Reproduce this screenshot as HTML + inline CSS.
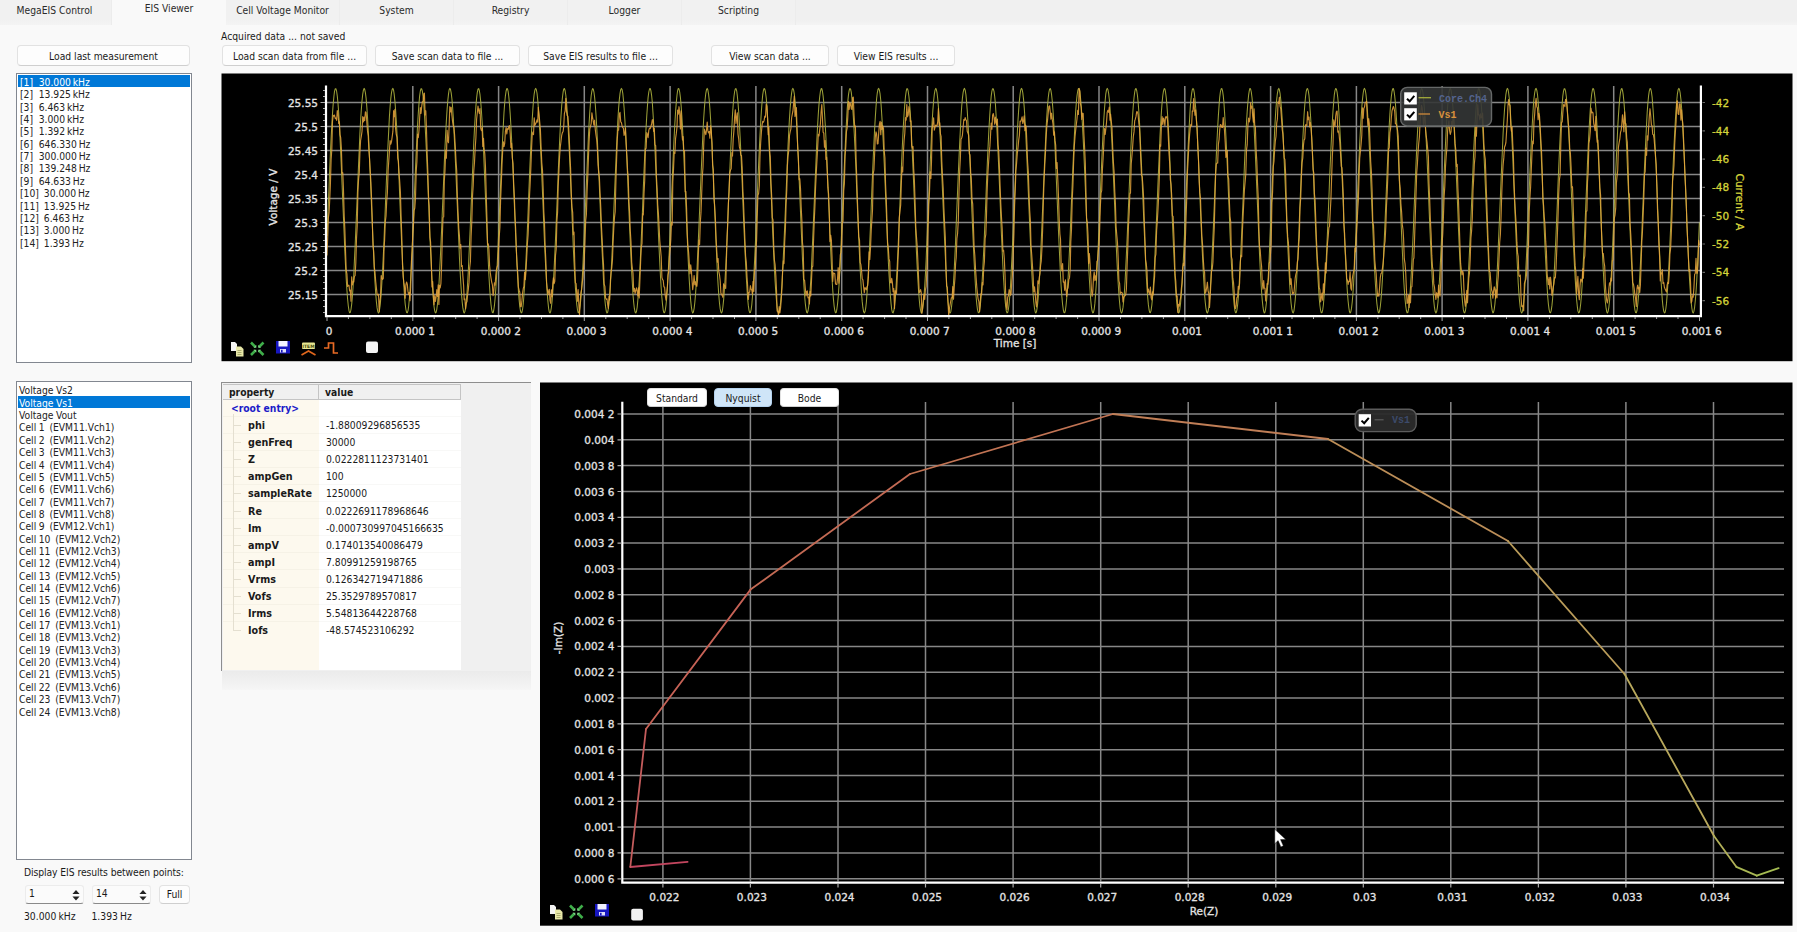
<!DOCTYPE html><html><head><meta charset="utf-8"><title>MegaEIS - EIS Viewer</title><style>
*{box-sizing:border-box;margin:0;padding:0}
html,body{width:1797px;height:932px;overflow:hidden;background:#f9f9f9}
body{position:relative;font-family:"DejaVu Sans Condensed","Liberation Sans",sans-serif;font-size:10.25px;color:#1a1a1a}
.a{position:absolute;white-space:pre}
.tab{position:absolute;top:0;height:25px;width:114px;background:linear-gradient(#f1f1f1 80%,#f4f4f4);border-right:1px solid #ececec;text-align:center;line-height:21px;color:#2a2a2a}
.tab.on{background:#f9f9f9;height:25px;border:none;line-height:17px}
.btn{position:absolute;height:21px;background:#fdfdfd;border:1px solid #e2e2e2;border-bottom-color:#cfcfcf;border-radius:4px;text-align:center;line-height:20px;white-space:pre;color:#1a1a1a}
.list{position:absolute;background:#fff;border:1px solid #828790}
.li{position:absolute;left:2px;white-space:pre;height:12px;line-height:12px;color:#222;word-spacing:-0.5px}
.sel{position:absolute;background:#0078d7}
.pl{font-family:"DejaVu Sans","Liberation Sans",sans-serif;font-size:10.5px;fill:#e4e4e4;stroke:#e4e4e4;stroke-width:.3px}
</style></head><body>
<div class="a" style="left:0;top:0;width:1797px;height:25px;background:linear-gradient(#f0f0f0 80%,#f4f4f4)"></div>
<div class="tab" style="left:-2px">MegaEIS Control</div>
<div class="tab on" style="left:112px">EIS Viewer</div>
<div class="tab" style="left:226px">Cell Voltage Monitor</div>
<div class="tab" style="left:340px">System</div>
<div class="tab" style="left:454px">Registry</div>
<div class="tab" style="left:568px">Logger</div>
<div class="tab" style="left:682px">Scripting</div>
<div class="btn" style="left:17px;top:45px;width:173px">Load last measurement</div>
<div class="a" style="left:221px;top:30px;line-height:13px">Acquired data ... not saved</div>
<div class="btn" style="left:222px;top:45px;width:145px">Load scan data from file ...</div>
<div class="btn" style="left:375px;top:45px;width:145px">Save scan data to file ...</div>
<div class="btn" style="left:528px;top:45px;width:145px">Save EIS results to file ...</div>
<div class="btn" style="left:711px;top:45px;width:118px">View scan data ...</div>
<div class="btn" style="left:837px;top:45px;width:118px">View EIS results ...</div>
<div class="list" style="left:16px;top:73px;width:176px;height:290px">
<div class="sel" style="left:1px;top:1px;width:172px;height:12px"></div>
<div class="li" style="left:3px;top:1.80px;color:#fff;">[1]<span style="position:absolute;left:18.7px;word-spacing:-1.1px">30.000 kHz</span></div>
<div class="li" style="left:3px;top:14.18px;">[2]<span style="position:absolute;left:18.7px;word-spacing:-1.1px">13.925 kHz</span></div>
<div class="li" style="left:3px;top:26.56px;">[3]<span style="position:absolute;left:18.7px;word-spacing:-1.1px">6.463 kHz</span></div>
<div class="li" style="left:3px;top:38.94px;">[4]<span style="position:absolute;left:18.7px;word-spacing:-1.1px">3.000 kHz</span></div>
<div class="li" style="left:3px;top:51.32px;">[5]<span style="position:absolute;left:18.7px;word-spacing:-1.1px">1.392 kHz</span></div>
<div class="li" style="left:3px;top:63.70px;">[6]<span style="position:absolute;left:18.7px;word-spacing:-1.1px">646.330 Hz</span></div>
<div class="li" style="left:3px;top:76.08px;">[7]<span style="position:absolute;left:18.7px;word-spacing:-1.1px">300.000 Hz</span></div>
<div class="li" style="left:3px;top:88.46px;">[8]<span style="position:absolute;left:18.7px;word-spacing:-1.1px">139.248 Hz</span></div>
<div class="li" style="left:3px;top:100.84px;">[9]<span style="position:absolute;left:18.7px;word-spacing:-1.1px">64.633 Hz</span></div>
<div class="li" style="left:3px;top:113.22px;">[10]<span style="position:absolute;left:23.8px;word-spacing:-1.1px">30.000 Hz</span></div>
<div class="li" style="left:3px;top:125.60px;">[11]<span style="position:absolute;left:23.8px;word-spacing:-1.1px">13.925 Hz</span></div>
<div class="li" style="left:3px;top:137.98px;">[12]<span style="position:absolute;left:23.8px;word-spacing:-1.1px">6.463 Hz</span></div>
<div class="li" style="left:3px;top:150.36px;">[13]<span style="position:absolute;left:23.8px;word-spacing:-1.1px">3.000 Hz</span></div>
<div class="li" style="left:3px;top:162.74px;">[14]<span style="position:absolute;left:23.8px;word-spacing:-1.1px">1.393 Hz</span></div>
</div>
<div class="list" style="left:16px;top:381px;width:176px;height:479px">
<div class="sel" style="left:1px;top:14px;width:172px;height:12px"></div>
<div class="li" style="top:2.40px;">Voltage Vs2</div>
<div class="li" style="top:14.75px;color:#fff;">Voltage Vs1</div>
<div class="li" style="top:27.10px;">Voltage Vout</div>
<div class="li" style="top:39.45px;">Cell 1  (EVM11.Vch1)</div>
<div class="li" style="top:51.80px;">Cell 2  (EVM11.Vch2)</div>
<div class="li" style="top:64.15px;">Cell 3  (EVM11.Vch3)</div>
<div class="li" style="top:76.50px;">Cell 4  (EVM11.Vch4)</div>
<div class="li" style="top:88.85px;">Cell 5  (EVM11.Vch5)</div>
<div class="li" style="top:101.20px;">Cell 6  (EVM11.Vch6)</div>
<div class="li" style="top:113.55px;">Cell 7  (EVM11.Vch7)</div>
<div class="li" style="top:125.90px;">Cell 8  (EVM11.Vch8)</div>
<div class="li" style="top:138.25px;">Cell 9  (EVM12.Vch1)</div>
<div class="li" style="top:150.60px;">Cell 10  (EVM12.Vch2)</div>
<div class="li" style="top:162.95px;">Cell 11  (EVM12.Vch3)</div>
<div class="li" style="top:175.30px;">Cell 12  (EVM12.Vch4)</div>
<div class="li" style="top:187.65px;">Cell 13  (EVM12.Vch5)</div>
<div class="li" style="top:200.00px;">Cell 14  (EVM12.Vch6)</div>
<div class="li" style="top:212.35px;">Cell 15  (EVM12.Vch7)</div>
<div class="li" style="top:224.70px;">Cell 16  (EVM12.Vch8)</div>
<div class="li" style="top:237.05px;">Cell 17  (EVM13.Vch1)</div>
<div class="li" style="top:249.40px;">Cell 18  (EVM13.Vch2)</div>
<div class="li" style="top:261.75px;">Cell 19  (EVM13.Vch3)</div>
<div class="li" style="top:274.10px;">Cell 20  (EVM13.Vch4)</div>
<div class="li" style="top:286.45px;">Cell 21  (EVM13.Vch5)</div>
<div class="li" style="top:298.80px;">Cell 22  (EVM13.Vch6)</div>
<div class="li" style="top:311.15px;">Cell 23  (EVM13.Vch7)</div>
<div class="li" style="top:323.50px;">Cell 24  (EVM13.Vch8)</div>
</div>
<div class="a" style="left:24px;top:866px;line-height:13px;letter-spacing:-0.07px">Display EIS results between points:</div>
<div class="a" style="left:25px;top:885px;width:59px;height:19px;background:#fbfbfb;border:1px solid #ececec;border-bottom:1px solid #8a8a8a;border-radius:3px;line-height:15px;padding-left:3px">1<svg class="a" style="right:3px;top:2.5px" width="8" height="12.5" viewBox="0 0 9 14"><path d="M0.5 5.5 L4.5 1 L8.5 5.5Z M0.5 8.5 L4.5 13 L8.5 8.5Z" fill="#222"/></svg></div>
<div class="a" style="left:92px;top:885px;width:59px;height:19px;background:#fbfbfb;border:1px solid #ececec;border-bottom:1px solid #8a8a8a;border-radius:3px;line-height:15px;padding-left:3px">14<svg class="a" style="right:3px;top:2.5px" width="8" height="12.5" viewBox="0 0 9 14"><path d="M0.5 5.5 L4.5 1 L8.5 5.5Z M0.5 8.5 L4.5 13 L8.5 8.5Z" fill="#222"/></svg></div>
<div class="btn" style="left:159px;top:885px;width:31px;height:19px;line-height:17px">Full</div>
<div class="a" style="left:24px;top:910px;line-height:13px;word-spacing:-0.8px">30.000 kHz</div>
<div class="a" style="left:91.5px;top:910px;line-height:13px;word-spacing:-0.8px">1.393 Hz</div>
<div class="a" style="left:221px;top:382px;width:310px;height:289px;background:#f0f0f0;border-top:1.5px solid #8e8e8e;border-left:1.5px solid #8e8e8e"></div>
<div class="a" style="left:222px;top:671px;width:309px;height:19px;background:linear-gradient(#ebebeb,#f2f2f2 70%,#f6f6f6)"></div>
<div class="a" style="left:223px;top:384px;width:96px;height:286px;background:#fdf9ee"></div>
<div class="a" style="left:319px;top:384px;width:142px;height:286px;background:#fff"></div>
<div class="a" style="left:223px;top:384px;width:96px;height:16px;background:#f0f0f0;border:1px solid #c4c4c4;border-left:none;font-weight:bold;line-height:14px;padding-left:6px">property</div>
<div class="a" style="left:319px;top:384px;width:142px;height:16px;background:#f0f0f0;border:1px solid #c4c4c4;border-left:none;font-weight:bold;line-height:14px;padding-left:6px">value</div>
<div class="a" style="left:231px;top:401px;line-height:14px;font-weight:bold;color:#1c1cc8">&lt;root entry&gt;</div>
<div class="a" style="left:248px;top:419.0px;line-height:14px;font-weight:bold;font-size:10.7px">phi</div>
<div class="a" style="left:326px;top:418.0px;line-height:14px">-1.88009296856535</div>
<div class="a" style="left:233px;top:425.0px;width:8px;height:1px;background:#e4dfd0"></div>
<div class="a" style="left:223px;top:415.5px;width:238px;height:1px;background:rgba(120,120,100,.05)"></div>
<div class="a" style="left:248px;top:436.1px;line-height:14px;font-weight:bold;font-size:10.7px">genFreq</div>
<div class="a" style="left:326px;top:435.1px;line-height:14px">30000</div>
<div class="a" style="left:233px;top:442.1px;width:8px;height:1px;background:#e4dfd0"></div>
<div class="a" style="left:223px;top:432.6px;width:238px;height:1px;background:rgba(120,120,100,.05)"></div>
<div class="a" style="left:248px;top:453.2px;line-height:14px;font-weight:bold;font-size:10.7px">Z</div>
<div class="a" style="left:326px;top:452.2px;line-height:14px">0.0222811123731401</div>
<div class="a" style="left:233px;top:459.2px;width:8px;height:1px;background:#e4dfd0"></div>
<div class="a" style="left:223px;top:449.7px;width:238px;height:1px;background:rgba(120,120,100,.05)"></div>
<div class="a" style="left:248px;top:470.3px;line-height:14px;font-weight:bold;font-size:10.7px">ampGen</div>
<div class="a" style="left:326px;top:469.3px;line-height:14px">100</div>
<div class="a" style="left:233px;top:476.3px;width:8px;height:1px;background:#e4dfd0"></div>
<div class="a" style="left:223px;top:466.8px;width:238px;height:1px;background:rgba(120,120,100,.05)"></div>
<div class="a" style="left:248px;top:487.4px;line-height:14px;font-weight:bold;font-size:10.7px">sampleRate</div>
<div class="a" style="left:326px;top:486.4px;line-height:14px">1250000</div>
<div class="a" style="left:233px;top:493.4px;width:8px;height:1px;background:#e4dfd0"></div>
<div class="a" style="left:223px;top:483.9px;width:238px;height:1px;background:rgba(120,120,100,.05)"></div>
<div class="a" style="left:248px;top:504.5px;line-height:14px;font-weight:bold;font-size:10.7px">Re</div>
<div class="a" style="left:326px;top:503.5px;line-height:14px">0.0222691178968646</div>
<div class="a" style="left:233px;top:510.5px;width:8px;height:1px;background:#e4dfd0"></div>
<div class="a" style="left:223px;top:501.0px;width:238px;height:1px;background:rgba(120,120,100,.05)"></div>
<div class="a" style="left:248px;top:521.6px;line-height:14px;font-weight:bold;font-size:10.7px">Im</div>
<div class="a" style="left:326px;top:520.6px;line-height:14px">-0.000730997045166635</div>
<div class="a" style="left:233px;top:527.6px;width:8px;height:1px;background:#e4dfd0"></div>
<div class="a" style="left:223px;top:518.1px;width:238px;height:1px;background:rgba(120,120,100,.05)"></div>
<div class="a" style="left:248px;top:538.7px;line-height:14px;font-weight:bold;font-size:10.7px">ampV</div>
<div class="a" style="left:326px;top:537.7px;line-height:14px">0.174013540086479</div>
<div class="a" style="left:233px;top:544.7px;width:8px;height:1px;background:#e4dfd0"></div>
<div class="a" style="left:223px;top:535.2px;width:238px;height:1px;background:rgba(120,120,100,.05)"></div>
<div class="a" style="left:248px;top:555.8px;line-height:14px;font-weight:bold;font-size:10.7px">ampI</div>
<div class="a" style="left:326px;top:554.8px;line-height:14px">7.80991259198765</div>
<div class="a" style="left:233px;top:561.8px;width:8px;height:1px;background:#e4dfd0"></div>
<div class="a" style="left:223px;top:552.3px;width:238px;height:1px;background:rgba(120,120,100,.05)"></div>
<div class="a" style="left:248px;top:572.9px;line-height:14px;font-weight:bold;font-size:10.7px">Vrms</div>
<div class="a" style="left:326px;top:571.9px;line-height:14px">0.126342719471886</div>
<div class="a" style="left:233px;top:578.9px;width:8px;height:1px;background:#e4dfd0"></div>
<div class="a" style="left:223px;top:569.4px;width:238px;height:1px;background:rgba(120,120,100,.05)"></div>
<div class="a" style="left:248px;top:590.0px;line-height:14px;font-weight:bold;font-size:10.7px">Vofs</div>
<div class="a" style="left:326px;top:589.0px;line-height:14px">25.3529789570817</div>
<div class="a" style="left:233px;top:596.0px;width:8px;height:1px;background:#e4dfd0"></div>
<div class="a" style="left:223px;top:586.5px;width:238px;height:1px;background:rgba(120,120,100,.05)"></div>
<div class="a" style="left:248px;top:607.1px;line-height:14px;font-weight:bold;font-size:10.7px">Irms</div>
<div class="a" style="left:326px;top:606.1px;line-height:14px">5.54813644228768</div>
<div class="a" style="left:233px;top:613.1px;width:8px;height:1px;background:#e4dfd0"></div>
<div class="a" style="left:223px;top:603.6px;width:238px;height:1px;background:rgba(120,120,100,.05)"></div>
<div class="a" style="left:248px;top:624.2px;line-height:14px;font-weight:bold;font-size:10.7px">Iofs</div>
<div class="a" style="left:326px;top:623.2px;line-height:14px">-48.574523106292</div>
<div class="a" style="left:233px;top:630.2px;width:8px;height:1px;background:#e4dfd0"></div>
<div class="a" style="left:223px;top:620.7px;width:238px;height:1px;background:rgba(120,120,100,.05)"></div>
<div class="a" style="left:233px;top:414px;width:1px;height:216px;background:#e4dfd0"></div>
<svg class="a" style="left:221px;top:73px" width="1572" height="289" viewBox="221 73 1572 289">
<rect x="221.5" y="73.5" width="1571" height="287.7" fill="#000"/>
<path d="M327 102.5H1701M327 126.5H1701M327 150.5H1701M327 174.5H1701M327 198.5H1701M327 222.5H1701M327 246.5H1701M327 270.5H1701M327 294.5H1701M412.8 86V316M498.6 86V316M584.3 86V316M670.1 86V316M755.9 86V316M841.7 86V316M927.5 86V316M1013.2 86V316M1099.0 86V316M1184.8 86V316M1270.6 86V316M1356.4 86V316M1442.1 86V316M1527.9 86V316M1613.7 86V316" stroke="#878787" stroke-width="1.5" fill="none"/>
<polyline points="327.0 235.9 327.7 219.5 328.4 202.6 329.1 185.7 329.7 169.2 330.4 153.3 331.1 138.6 331.8 125.2 332.5 113.6 333.2 103.9 333.9 96.5 334.5 91.4 335.2 88.8 335.9 88.7 336.6 91.2 337.3 96.1 338.0 103.5 338.7 113.0 339.4 124.6 340.0 137.8 340.7 152.5 341.4 168.3 342.1 184.9 342.8 201.8 343.5 218.6 344.2 235.1 344.8 250.8 345.5 265.3 346.2 278.4 346.9 289.7 347.6 299.0 348.3 306.0 349.0 310.7 349.6 312.8 350.3 312.5 351.0 309.5 351.7 304.1 352.4 296.4 353.1 286.5 353.8 274.6 354.4 261.1 355.1 246.2 355.8 230.2 356.5 213.6 357.2 196.7 357.9 179.9 358.6 163.5 359.3 148.0 359.9 133.7 360.6 120.9 361.3 109.9 362.0 101.0 362.7 94.4 363.4 90.2 364.1 88.4 364.7 89.3 365.4 92.6 366.1 98.4 366.8 106.6 367.5 116.9 368.2 129.0 368.9 142.8 369.5 158.0 370.2 174.1 370.9 190.8 371.6 207.7 372.3 224.4 373.0 240.7 373.7 256.0 374.3 270.1 375.0 282.5 375.7 293.2 376.4 301.7 377.1 307.9 377.8 311.7 378.5 313.0 379.2 311.7 379.8 307.9 380.5 301.7 381.2 293.2 381.9 282.5 382.6 270.1 383.3 256.0 384.0 240.7 384.6 224.4 385.3 207.7 386.0 190.8 386.7 174.1 387.4 158.0 388.1 142.8 388.8 129.0 389.4 116.9 390.1 106.6 390.8 98.4 391.5 92.6 392.2 89.3 392.9 88.4 393.6 90.2 394.2 94.4 394.9 101.0 395.6 109.9 396.3 120.9 397.0 133.7 397.7 148.0 398.4 163.5 399.1 179.9 399.7 196.7 400.4 213.6 401.1 230.2 401.8 246.2 402.5 261.1 403.2 274.6 403.9 286.5 404.5 296.4 405.2 304.1 405.9 309.5 406.6 312.5 407.3 312.8 408.0 310.7 408.7 306.0 409.3 299.0 410.0 289.7 410.7 278.4 411.4 265.3 412.1 250.8 412.8 235.1 413.5 218.6 414.1 201.8 414.8 184.9 415.5 168.3 416.2 152.5 416.9 137.8 417.6 124.6 418.3 113.0 419.0 103.5 419.6 96.1 420.3 91.2 421.0 88.7 421.7 88.8 422.4 91.4 423.1 96.5 423.8 103.9 424.4 113.6 425.1 125.2 425.8 138.6 426.5 153.3 427.2 169.2 427.9 185.7 428.6 202.6 429.2 219.5 429.9 235.9 430.6 251.5 431.3 266.0 432.0 279.0 432.7 290.2 433.4 299.4 434.0 306.3 434.7 310.8 435.4 312.9 436.1 312.4 436.8 309.3 437.5 303.8 438.2 295.9 438.9 285.9 439.5 274.0 440.2 260.3 440.9 245.4 441.6 229.4 442.3 212.7 443.0 195.8 443.7 179.0 444.3 162.7 445.0 147.2 445.7 133.0 446.4 120.3 447.1 109.4 447.8 100.6 448.5 94.1 449.1 90.0 449.8 88.4 450.5 89.4 451.2 92.9 451.9 98.8 452.6 107.1 453.3 117.4 453.9 129.7 454.6 143.6 455.3 158.8 456.0 174.9 456.7 191.6 457.4 208.5 458.1 225.3 458.8 241.5 459.4 256.7 460.1 270.7 460.8 283.1 461.5 293.7 462.2 302.1 462.9 308.2 463.6 311.9 464.2 313.0 464.9 311.6 465.6 307.7 466.3 301.3 467.0 292.7 467.7 281.9 468.4 269.4 469.0 255.2 469.7 239.9 470.4 223.6 471.1 206.8 471.8 189.9 472.5 173.2 473.2 157.2 473.8 142.1 474.5 128.4 475.2 116.3 475.9 106.1 476.6 98.1 477.3 92.4 478.0 89.2 478.7 88.5 479.3 90.3 480.0 94.7 480.7 101.4 481.4 110.5 482.1 121.5 482.8 134.4 483.5 148.8 484.1 164.3 484.8 180.7 485.5 197.5 486.2 214.5 486.9 231.0 487.6 247.0 488.3 261.8 488.9 275.3 489.6 287.0 490.3 296.9 491.0 304.5 491.7 309.7 492.4 312.5 493.1 312.8 493.7 310.5 494.4 305.7 495.1 298.5 495.8 289.1 496.5 277.7 497.2 264.6 497.9 250.0 498.6 234.3 499.2 217.8 499.9 200.9 500.6 184.0 501.3 167.5 502.0 151.8 502.7 137.1 503.4 123.9 504.0 112.5 504.7 103.0 505.4 95.8 506.1 91.0 506.8 88.6 507.5 88.8 508.2 91.6 508.8 96.8 509.5 104.4 510.2 114.1 510.9 125.8 511.6 139.3 512.3 154.1 513.0 170.0 513.6 186.6 514.3 203.5 515.0 220.3 515.7 236.7 516.4 252.3 517.1 266.7 517.8 279.6 518.4 290.7 519.1 299.8 519.8 306.6 520.5 311.0 521.2 312.9 521.9 312.3 522.6 309.1 523.3 303.5 523.9 295.5 524.6 285.4 525.3 273.3 526.0 259.6 526.7 244.6 527.4 228.5 528.1 211.9 528.7 195.0 529.4 178.2 530.1 161.9 530.8 146.5 531.5 132.3 532.2 119.7 532.9 108.9 533.5 100.3 534.2 93.8 534.9 89.9 535.6 88.4 536.3 89.5 537.0 93.1 537.7 99.2 538.3 107.5 539.0 118.0 539.7 130.4 540.4 144.3 541.1 159.6 541.8 175.7 542.5 192.5 543.2 209.4 543.8 226.1 544.5 242.3 545.2 257.5 545.9 271.4 546.6 283.7 547.3 294.1 548.0 302.4 548.6 308.4 549.3 312.0 550.0 313.0 550.7 311.5 551.4 307.4 552.1 300.9 552.8 292.2 553.4 281.3 554.1 268.7 554.8 254.5 555.5 239.1 556.2 222.8 556.9 206.0 557.6 189.0 558.2 172.4 558.9 156.4 559.6 141.4 560.3 127.7 561.0 115.7 561.7 105.6 562.4 97.7 563.1 92.2 563.7 89.1 564.4 88.5 565.1 90.5 565.8 95.0 566.5 101.8 567.2 111.0 567.9 122.1 568.5 135.1 569.2 149.5 569.9 165.1 570.6 181.6 571.3 198.4 572.0 215.3 572.7 231.9 573.3 247.7 574.0 262.5 574.7 275.9 575.4 287.6 576.1 297.3 576.8 304.8 577.5 310.0 578.1 312.6 578.8 312.7 579.5 310.3 580.2 305.4 580.9 298.1 581.6 288.6 582.3 277.1 583.0 263.9 583.6 249.2 584.3 233.4 585.0 216.9 585.7 200.0 586.4 183.2 587.1 166.7 587.8 151.0 588.4 136.4 589.1 123.3 589.8 112.0 590.5 102.6 591.2 95.5 591.9 90.8 592.6 88.6 593.2 88.9 593.9 91.8 594.6 97.1 595.3 104.8 596.0 114.7 596.7 126.5 597.4 140.0 598.0 154.9 598.7 170.8 599.4 187.4 600.1 204.3 600.8 221.2 601.5 237.5 602.2 253.1 602.9 267.4 603.5 280.2 604.2 291.2 604.9 300.2 605.6 306.9 606.3 311.2 607.0 313.0 607.7 312.2 608.3 308.9 609.0 303.1 609.7 295.0 610.4 284.8 611.1 272.7 611.8 258.9 612.5 243.8 613.1 227.7 613.8 211.0 614.5 194.1 615.2 177.3 615.9 161.1 616.6 145.7 617.3 131.6 617.9 119.1 618.6 108.4 619.3 99.9 620.0 93.6 620.7 89.7 621.4 88.4 622.1 89.6 622.8 93.4 623.4 99.5 624.1 108.0 624.8 118.6 625.5 131.1 626.2 145.1 626.9 160.4 627.6 176.6 628.2 193.3 628.9 210.3 629.6 227.0 630.3 243.1 631.0 258.2 631.7 272.1 632.4 284.3 633.0 294.6 633.7 302.8 634.4 308.7 635.1 312.1 635.8 313.0 636.5 311.3 637.2 307.1 637.8 300.5 638.5 291.7 639.2 280.7 639.9 268.0 640.6 253.7 641.3 238.2 642.0 221.9 642.7 205.1 643.3 188.2 644.0 171.5 644.7 155.6 645.4 140.6 646.1 127.1 646.8 115.2 647.5 105.2 648.1 97.4 648.8 92.0 649.5 89.0 650.2 88.5 650.9 90.6 651.6 95.3 652.3 102.3 652.9 111.5 653.6 122.8 654.3 135.8 655.0 150.3 655.7 166.0 656.4 182.4 657.1 199.3 657.7 216.2 658.4 232.7 659.1 248.5 659.8 263.2 660.5 276.6 661.2 288.1 661.9 297.7 662.6 305.1 663.2 310.1 663.9 312.7 664.6 312.7 665.3 310.1 666.0 305.1 666.7 297.7 667.4 288.1 668.0 276.5 668.7 263.2 669.4 248.4 670.1 232.6 670.8 216.1 671.5 199.2 672.2 182.3 672.8 165.9 673.5 150.2 674.2 135.7 674.9 122.7 675.6 111.4 676.3 102.2 677.0 95.2 677.6 90.6 678.3 88.5 679.0 89.0 679.7 92.0 680.4 97.4 681.1 105.3 681.8 115.2 682.5 127.1 683.1 140.7 683.8 155.7 684.5 171.7 685.2 188.3 685.9 205.2 686.6 222.0 687.3 238.3 687.9 253.8 688.6 268.1 689.3 280.8 690.0 291.7 690.7 300.6 691.4 307.2 692.1 311.3 692.7 313.0 693.4 312.1 694.1 308.6 694.8 302.8 695.5 294.6 696.2 284.2 696.9 272.0 697.5 258.1 698.2 243.0 698.9 226.9 699.6 210.2 700.3 193.2 701.0 176.5 701.7 160.3 702.4 145.0 703.0 131.0 703.7 118.5 704.4 108.0 705.1 99.5 705.8 93.3 706.5 89.6 707.2 88.4 707.8 89.7 708.5 93.6 709.2 99.9 709.9 108.5 710.6 119.2 711.3 131.7 712.0 145.8 712.6 161.2 713.3 177.4 714.0 194.2 714.7 211.1 715.4 227.8 716.1 243.9 716.8 259.0 717.4 272.7 718.1 284.9 718.8 295.1 719.5 303.2 720.2 308.9 720.9 312.2 721.6 312.9 722.3 311.2 722.9 306.8 723.6 300.1 724.3 291.2 725.0 280.1 725.7 267.3 726.4 253.0 727.1 237.4 727.7 221.1 728.4 204.2 729.1 187.3 729.8 170.7 730.5 154.8 731.2 139.9 731.9 126.4 732.5 114.6 733.2 104.7 733.9 97.1 734.6 91.7 735.3 88.9 736.0 88.6 736.7 90.8 737.3 95.6 738.0 102.7 738.7 112.0 739.4 123.4 740.1 136.5 740.8 151.1 741.5 166.8 742.2 183.3 742.8 200.1 743.5 217.0 744.2 233.5 744.9 249.3 745.6 264.0 746.3 277.2 747.0 288.7 747.6 298.2 748.3 305.4 749.0 310.3 749.7 312.7 750.4 312.6 751.1 309.9 751.8 304.8 752.4 297.2 753.1 287.5 753.8 275.8 754.5 262.4 755.2 247.6 755.9 231.8 756.6 215.2 757.2 198.3 757.9 181.4 758.6 165.0 759.3 149.4 760.0 135.0 760.7 122.1 761.4 110.9 762.1 101.8 762.7 94.9 763.4 90.5 764.1 88.5 764.8 89.1 765.5 92.2 766.2 97.8 766.9 105.7 767.5 115.8 768.2 127.8 768.9 141.5 769.6 156.5 770.3 172.5 771.0 189.2 771.7 206.1 772.3 222.9 773.0 239.2 773.7 254.6 774.4 268.8 775.1 281.4 775.8 292.2 776.5 301.0 777.1 307.4 777.8 311.5 778.5 313.0 779.2 312.0 779.9 308.4 780.6 302.4 781.3 294.1 782.0 283.6 782.6 271.3 783.3 257.4 784.0 242.2 784.7 226.0 785.4 209.3 786.1 192.4 786.8 175.6 787.4 159.5 788.1 144.2 788.8 130.3 789.5 117.9 790.2 107.5 790.9 99.1 791.6 93.1 792.2 89.5 792.9 88.4 793.6 89.9 794.3 93.9 795.0 100.3 795.7 109.0 796.4 119.8 797.0 132.4 797.7 146.6 798.4 162.0 799.1 178.3 799.8 195.1 800.5 212.0 801.2 228.7 801.9 244.7 802.5 259.7 803.2 273.4 803.9 285.4 804.6 295.5 805.3 303.5 806.0 309.1 806.7 312.3 807.3 312.9 808.0 311.0 808.7 306.6 809.4 299.7 810.1 290.6 810.8 279.5 811.5 266.6 812.1 252.2 812.8 236.6 813.5 220.2 814.2 203.4 814.9 186.5 815.6 169.9 816.3 154.0 816.9 139.2 817.6 125.8 818.3 114.0 819.0 104.3 819.7 96.7 820.4 91.5 821.1 88.8 821.8 88.6 822.4 91.0 823.1 95.9 823.8 103.1 824.5 112.6 825.2 124.0 825.9 137.2 826.6 151.9 827.2 167.6 827.9 184.1 828.6 201.0 829.3 217.9 830.0 234.4 830.7 250.1 831.4 264.7 832.0 277.8 832.7 289.2 833.4 298.6 834.1 305.8 834.8 310.5 835.5 312.8 836.2 312.5 836.8 309.7 837.5 304.4 838.2 296.8 838.9 287.0 839.6 275.2 840.3 261.7 841.0 246.8 841.7 230.9 842.3 214.3 843.0 197.4 843.7 180.6 844.4 164.2 845.1 148.7 845.8 134.3 846.5 121.5 847.1 110.4 847.8 101.4 848.5 94.6 849.2 90.3 849.9 88.5 850.6 89.2 851.3 92.4 851.9 98.1 852.6 106.2 853.3 116.4 854.0 128.5 854.7 142.2 855.4 157.3 856.1 173.3 856.7 190.0 857.4 206.9 858.1 223.7 858.8 240.0 859.5 255.3 860.2 269.5 860.9 282.0 861.5 292.7 862.2 301.4 862.9 307.7 863.6 311.6 864.3 313.0 865.0 311.8 865.7 308.1 866.4 302.0 867.0 293.6 867.7 283.1 868.4 270.6 869.1 256.6 869.8 241.4 870.5 225.2 871.2 208.4 871.8 191.5 872.5 174.8 873.2 158.7 873.9 143.5 874.6 129.6 875.3 117.4 876.0 107.0 876.6 98.8 877.3 92.8 878.0 89.4 878.7 88.4 879.4 90.0 880.1 94.2 880.8 100.7 881.4 109.5 882.1 120.4 882.8 133.1 883.5 147.3 884.2 162.8 884.9 179.1 885.6 195.9 886.3 212.8 886.9 229.5 887.6 245.5 888.3 260.4 889.0 274.1 889.7 286.0 890.4 296.0 891.1 303.9 891.7 309.4 892.4 312.4 893.1 312.9 893.8 310.8 894.5 306.3 895.2 299.3 895.9 290.1 896.5 278.9 897.2 265.9 897.9 251.4 898.6 235.8 899.3 219.4 900.0 202.5 900.7 185.6 901.3 169.1 902.0 153.2 902.7 138.5 903.4 125.1 904.1 113.5 904.8 103.9 905.5 96.4 906.2 91.3 906.8 88.7 907.5 88.7 908.2 91.2 908.9 96.2 909.6 103.5 910.3 113.1 911.0 124.7 911.6 137.9 912.3 152.6 913.0 168.4 913.7 185.0 914.4 201.9 915.1 218.7 915.8 235.2 916.4 250.9 917.1 265.4 917.8 278.4 918.5 289.7 919.2 299.0 919.9 306.1 920.6 310.7 921.2 312.8 921.9 312.4 922.6 309.5 923.3 304.1 924.0 296.3 924.7 286.4 925.4 274.5 926.1 261.0 926.7 246.1 927.4 230.1 928.1 213.5 928.8 196.6 929.5 179.7 930.2 163.4 930.9 147.9 931.5 133.6 932.2 120.8 932.9 109.9 933.6 101.0 934.3 94.4 935.0 90.1 935.7 88.4 936.3 89.3 937.0 92.7 937.7 98.5 938.4 106.6 939.1 116.9 939.8 129.1 940.5 142.9 941.1 158.1 941.8 174.2 942.5 190.9 943.2 207.8 943.9 224.6 944.6 240.8 945.3 256.1 946.0 270.1 946.6 282.6 947.3 293.2 948.0 301.7 948.7 308.0 949.4 311.7 950.1 313.0 950.8 311.7 951.4 307.9 952.1 301.6 952.8 293.1 953.5 282.5 954.2 270.0 954.9 255.9 955.6 240.6 956.2 224.3 956.9 207.6 957.6 190.6 958.3 174.0 959.0 157.9 959.7 142.7 960.4 129.0 961.0 116.8 961.7 106.5 962.4 98.4 963.1 92.6 963.8 89.3 964.5 88.4 965.2 90.2 965.9 94.4 966.5 101.1 967.2 110.0 967.9 121.0 968.6 133.8 969.3 148.1 970.0 163.6 970.7 180.0 971.3 196.8 972.0 213.7 972.7 230.3 973.4 246.3 974.1 261.2 974.8 274.7 975.5 286.6 976.1 296.5 976.8 304.2 977.5 309.6 978.2 312.5 978.9 312.8 979.6 310.7 980.3 306.0 980.9 298.9 981.6 289.6 982.3 278.3 983.0 265.2 983.7 250.6 984.4 235.0 985.1 218.5 985.8 201.6 986.4 184.8 987.1 168.2 987.8 152.4 988.5 137.7 989.2 124.5 989.9 113.0 990.6 103.4 991.2 96.1 991.9 91.1 992.6 88.7 993.3 88.8 994.0 91.4 994.7 96.5 995.4 104.0 996.0 113.6 996.7 125.3 997.4 138.7 998.1 153.4 998.8 169.3 999.5 185.8 1000.2 202.7 1000.8 219.6 1001.5 236.0 1002.2 251.6 1002.9 266.1 1003.6 279.1 1004.3 290.3 1005.0 299.4 1005.7 306.4 1006.3 310.9 1007.0 312.9 1007.7 312.4 1008.4 309.3 1009.1 303.8 1009.8 295.9 1010.5 285.9 1011.1 273.9 1011.8 260.3 1012.5 245.3 1013.2 229.3 1013.9 212.6 1014.6 195.7 1015.3 178.9 1015.9 162.6 1016.6 147.1 1017.3 132.9 1018.0 120.2 1018.7 109.4 1019.4 100.6 1020.1 94.1 1020.7 90.0 1021.4 88.4 1022.1 89.4 1022.8 92.9 1023.5 98.9 1024.2 107.1 1024.9 117.5 1025.6 129.8 1026.2 143.7 1026.9 158.9 1027.6 175.0 1028.3 191.7 1029.0 208.7 1029.7 225.4 1030.4 241.6 1031.0 256.8 1031.7 270.8 1032.4 283.2 1033.1 293.7 1033.8 302.1 1034.5 308.2 1035.2 311.9 1035.8 313.0 1036.5 311.6 1037.2 307.6 1037.9 301.3 1038.6 292.6 1039.3 281.9 1040.0 269.3 1040.6 255.1 1041.3 239.8 1042.0 223.5 1042.7 206.7 1043.4 189.8 1044.1 173.1 1044.8 157.1 1045.5 142.0 1046.1 128.3 1046.8 116.2 1047.5 106.1 1048.2 98.0 1048.9 92.4 1049.6 89.2 1050.3 88.5 1050.9 90.3 1051.6 94.7 1052.3 101.5 1053.0 110.5 1053.7 121.6 1054.4 134.5 1055.1 148.9 1055.7 164.4 1056.4 180.8 1057.1 197.7 1057.8 214.6 1058.5 231.2 1059.2 247.1 1059.9 261.9 1060.5 275.4 1061.2 287.1 1061.9 296.9 1062.6 304.5 1063.3 309.8 1064.0 312.6 1064.7 312.8 1065.4 310.5 1066.0 305.7 1066.7 298.5 1067.4 289.1 1068.1 277.7 1068.8 264.5 1069.5 249.9 1070.2 234.1 1070.8 217.7 1071.5 200.8 1072.2 183.9 1072.9 167.4 1073.6 151.7 1074.3 137.0 1075.0 123.9 1075.6 112.4 1076.3 103.0 1077.0 95.8 1077.7 91.0 1078.4 88.6 1079.1 88.8 1079.8 91.6 1080.4 96.8 1081.1 104.4 1081.8 114.2 1082.5 125.9 1083.2 139.4 1083.9 154.2 1084.6 170.1 1085.3 186.7 1085.9 203.6 1086.6 220.4 1087.3 236.8 1088.0 252.4 1088.7 266.8 1089.4 279.7 1090.1 290.8 1090.7 299.8 1091.4 306.6 1092.1 311.0 1092.8 312.9 1093.5 312.3 1094.2 309.1 1094.9 303.4 1095.5 295.4 1096.2 285.3 1096.9 273.2 1097.6 259.5 1098.3 244.5 1099.0 228.4 1099.7 211.8 1100.3 194.8 1101.0 178.1 1101.7 161.8 1102.4 146.4 1103.1 132.2 1103.8 119.6 1104.5 108.9 1105.2 100.2 1105.8 93.8 1106.5 89.9 1107.2 88.4 1107.9 89.5 1108.6 93.1 1109.3 99.2 1110.0 107.6 1110.6 118.1 1111.3 130.5 1112.0 144.4 1112.7 159.7 1113.4 175.9 1114.1 192.6 1114.8 209.5 1115.4 226.2 1116.1 242.4 1116.8 257.6 1117.5 271.5 1118.2 283.8 1118.9 294.2 1119.6 302.5 1120.2 308.5 1120.9 312.0 1121.6 313.0 1122.3 311.4 1123.0 307.4 1123.7 300.9 1124.4 292.1 1125.1 281.3 1125.7 268.6 1126.4 254.4 1127.1 238.9 1127.8 222.6 1128.5 205.8 1129.2 188.9 1129.9 172.3 1130.5 156.3 1131.2 141.3 1131.9 127.6 1132.6 115.6 1133.3 105.6 1134.0 97.7 1134.7 92.1 1135.3 89.1 1136.0 88.5 1136.7 90.5 1137.4 95.0 1138.1 101.9 1138.8 111.0 1139.5 122.2 1140.1 135.2 1140.8 149.6 1141.5 165.3 1142.2 181.7 1142.9 198.5 1143.6 215.4 1144.3 232.0 1145.0 247.8 1145.6 262.6 1146.3 276.0 1147.0 287.7 1147.7 297.4 1148.4 304.9 1149.1 310.0 1149.8 312.6 1150.4 312.7 1151.1 310.3 1151.8 305.4 1152.5 298.1 1153.2 288.5 1153.9 277.0 1154.6 263.8 1155.2 249.1 1155.9 233.3 1156.6 216.8 1157.3 199.9 1158.0 183.0 1158.7 166.6 1159.4 150.9 1160.0 136.3 1160.7 123.2 1161.4 111.9 1162.1 102.6 1162.8 95.5 1163.5 90.8 1164.2 88.6 1164.9 88.9 1165.5 91.8 1166.2 97.2 1166.9 104.9 1167.6 114.7 1168.3 126.6 1169.0 140.1 1169.7 155.0 1170.3 170.9 1171.0 187.5 1171.7 204.5 1172.4 221.3 1173.1 237.6 1173.8 253.2 1174.5 267.5 1175.1 280.3 1175.8 291.3 1176.5 300.2 1177.2 306.9 1177.9 311.2 1178.6 313.0 1179.3 312.2 1179.9 308.8 1180.6 303.1 1181.3 295.0 1182.0 284.7 1182.7 272.6 1183.4 258.8 1184.1 243.7 1184.8 227.6 1185.4 210.9 1186.1 194.0 1186.8 177.2 1187.5 161.0 1188.2 145.6 1188.9 131.6 1189.6 119.0 1190.2 108.4 1190.9 99.8 1191.6 93.6 1192.3 89.7 1193.0 88.4 1193.7 89.6 1194.4 93.4 1195.0 99.6 1195.7 108.1 1196.4 118.7 1197.1 131.1 1197.8 145.2 1198.5 160.5 1199.2 176.7 1199.8 193.5 1200.5 210.4 1201.2 227.1 1201.9 243.2 1202.6 258.3 1203.3 272.2 1204.0 284.4 1204.6 294.7 1205.3 302.8 1206.0 308.7 1206.7 312.1 1207.4 313.0 1208.1 311.3 1208.8 307.1 1209.5 300.5 1210.1 291.6 1210.8 280.7 1211.5 267.9 1212.2 253.6 1212.9 238.1 1213.6 221.8 1214.3 205.0 1214.9 188.1 1215.6 171.4 1216.3 155.5 1217.0 140.5 1217.7 127.0 1218.4 115.1 1219.1 105.1 1219.7 97.4 1220.4 91.9 1221.1 89.0 1221.8 88.5 1222.5 90.7 1223.2 95.3 1223.9 102.3 1224.5 111.6 1225.2 122.8 1225.9 135.9 1226.6 150.4 1227.3 166.1 1228.0 182.5 1228.7 199.4 1229.4 216.3 1230.0 232.8 1230.7 248.6 1231.4 263.3 1232.1 276.6 1232.8 288.2 1233.5 297.8 1234.2 305.2 1234.8 310.2 1235.5 312.7 1236.2 312.7 1236.9 310.1 1237.6 305.0 1238.3 297.6 1239.0 288.0 1239.6 276.4 1240.3 263.1 1241.0 248.3 1241.7 232.5 1242.4 215.9 1243.1 199.0 1243.8 182.2 1244.4 165.8 1245.1 150.1 1245.8 135.6 1246.5 122.6 1247.2 111.4 1247.9 102.2 1248.6 95.2 1249.3 90.6 1249.9 88.5 1250.6 89.0 1251.3 92.0 1252.0 97.5 1252.7 105.3 1253.4 115.3 1254.1 127.2 1254.7 140.8 1255.4 155.8 1256.1 171.8 1256.8 188.4 1257.5 205.3 1258.2 222.1 1258.9 238.5 1259.5 253.9 1260.2 268.2 1260.9 280.9 1261.6 291.8 1262.3 300.6 1263.0 307.2 1263.7 311.3 1264.3 313.0 1265.0 312.1 1265.7 308.6 1266.4 302.7 1267.1 294.5 1267.8 284.1 1268.5 271.9 1269.2 258.0 1269.8 242.9 1270.5 226.8 1271.2 210.0 1271.9 193.1 1272.6 176.4 1273.3 160.2 1274.0 144.9 1274.6 130.9 1275.3 118.4 1276.0 107.9 1276.7 99.4 1277.4 93.3 1278.1 89.6 1278.8 88.4 1279.4 89.8 1280.1 93.7 1280.8 100.0 1281.5 108.6 1282.2 119.3 1282.9 131.8 1283.6 145.9 1284.2 161.3 1284.9 177.5 1285.6 194.3 1286.3 211.2 1287.0 227.9 1287.7 244.0 1288.4 259.1 1289.1 272.8 1289.7 284.9 1290.4 295.1 1291.1 303.2 1291.8 308.9 1292.5 312.2 1293.2 312.9 1293.9 311.1 1294.5 306.8 1295.2 300.1 1295.9 291.1 1296.6 280.1 1297.3 267.2 1298.0 252.9 1298.7 237.3 1299.3 220.9 1300.0 204.1 1300.7 187.2 1301.4 170.6 1302.1 154.7 1302.8 139.8 1303.5 126.3 1304.1 114.5 1304.8 104.7 1305.5 97.0 1306.2 91.7 1306.9 88.9 1307.6 88.6 1308.3 90.8 1309.0 95.6 1309.6 102.7 1310.3 112.1 1311.0 123.5 1311.7 136.6 1312.4 151.2 1313.1 166.9 1313.8 183.4 1314.4 200.3 1315.1 217.1 1315.8 233.6 1316.5 249.4 1317.2 264.1 1317.9 277.3 1318.6 288.7 1319.2 298.2 1319.9 305.5 1320.6 310.4 1321.3 312.8 1322.0 312.6 1322.7 309.9 1323.4 304.7 1324.0 297.2 1324.7 287.4 1325.4 275.7 1326.1 262.3 1326.8 247.5 1327.5 231.7 1328.2 215.1 1328.9 198.2 1329.5 181.3 1330.2 164.9 1330.9 149.3 1331.6 134.9 1332.3 122.0 1333.0 110.8 1333.7 101.7 1334.3 94.9 1335.0 90.4 1335.7 88.5 1336.4 89.1 1337.1 92.2 1337.8 97.8 1338.5 105.8 1339.1 115.9 1339.8 127.9 1340.5 141.6 1341.2 156.6 1341.9 172.6 1342.6 189.3 1343.3 206.2 1343.9 223.0 1344.6 239.3 1345.3 254.7 1346.0 268.9 1346.7 281.5 1347.4 292.3 1348.1 301.0 1348.8 307.5 1349.4 311.5 1350.1 313.0 1350.8 311.9 1351.5 308.4 1352.2 302.3 1352.9 294.0 1353.6 283.6 1354.2 271.2 1354.9 257.3 1355.6 242.1 1356.3 225.9 1357.0 209.2 1357.7 192.3 1358.4 175.5 1359.0 159.4 1359.7 144.1 1360.4 130.2 1361.1 117.9 1361.8 107.4 1362.5 99.1 1363.2 93.0 1363.8 89.5 1364.5 88.4 1365.2 89.9 1365.9 93.9 1366.6 100.4 1367.3 109.1 1368.0 119.9 1368.7 132.5 1369.3 146.7 1370.0 162.1 1370.7 178.4 1371.4 195.2 1372.1 212.1 1372.8 228.8 1373.5 244.8 1374.1 259.8 1374.8 273.5 1375.5 285.5 1376.2 295.6 1376.9 303.6 1377.6 309.2 1378.3 312.3 1378.9 312.9 1379.6 311.0 1380.3 306.5 1381.0 299.7 1381.7 290.6 1382.4 279.4 1383.1 266.5 1383.7 252.1 1384.4 236.5 1385.1 220.1 1385.8 203.3 1386.5 186.4 1387.2 169.8 1387.9 153.9 1388.6 139.1 1389.2 125.7 1389.9 114.0 1390.6 104.2 1391.3 96.7 1392.0 91.5 1392.7 88.8 1393.4 88.6 1394.0 91.0 1394.7 95.9 1395.4 103.2 1396.1 112.6 1396.8 124.1 1397.5 137.3 1398.2 152.0 1398.8 167.7 1399.5 184.2 1400.2 201.1 1400.9 218.0 1401.6 234.5 1402.3 250.2 1403.0 264.8 1403.6 277.9 1404.3 289.3 1405.0 298.6 1405.7 305.8 1406.4 310.5 1407.1 312.8 1407.8 312.5 1408.5 309.7 1409.1 304.4 1409.8 296.7 1410.5 286.9 1411.2 275.1 1411.9 261.6 1412.6 246.7 1413.3 230.8 1413.9 214.2 1414.6 197.3 1415.3 180.5 1416.0 164.1 1416.7 148.6 1417.4 134.2 1418.1 121.4 1418.7 110.3 1419.4 101.3 1420.1 94.6 1420.8 90.3 1421.5 88.5 1422.2 89.2 1422.9 92.5 1423.5 98.2 1424.2 106.2 1424.9 116.4 1425.6 128.5 1426.3 142.3 1427.0 157.4 1427.7 173.4 1428.4 190.1 1429.0 207.0 1429.7 223.8 1430.4 240.1 1431.1 255.4 1431.8 269.6 1432.5 282.1 1433.2 292.8 1433.8 301.4 1434.5 307.7 1435.2 311.6 1435.9 313.0 1436.6 311.8 1437.3 308.1 1438.0 302.0 1438.6 293.5 1439.3 283.0 1440.0 270.6 1440.7 256.5 1441.4 241.3 1442.1 225.1 1442.8 208.3 1443.4 191.4 1444.1 174.7 1444.8 158.6 1445.5 143.4 1446.2 129.5 1446.9 117.3 1447.6 106.9 1448.3 98.7 1448.9 92.8 1449.6 89.3 1450.3 88.4 1451.0 90.0 1451.7 94.2 1452.4 100.7 1453.1 109.6 1453.7 120.5 1454.4 133.2 1455.1 147.4 1455.8 162.9 1456.5 179.2 1457.2 196.0 1457.9 213.0 1458.5 229.6 1459.2 245.6 1459.9 260.5 1460.6 274.1 1461.3 286.1 1462.0 296.1 1462.7 303.9 1463.3 309.4 1464.0 312.4 1464.7 312.9 1465.4 310.8 1466.1 306.2 1466.8 299.3 1467.5 290.1 1468.2 278.8 1468.8 265.8 1469.5 251.3 1470.2 235.7 1470.9 219.2 1471.6 202.4 1472.3 185.5 1473.0 168.9 1473.6 153.1 1474.3 138.4 1475.0 125.0 1475.7 113.4 1476.4 103.8 1477.1 96.4 1477.8 91.3 1478.4 88.7 1479.1 88.7 1479.8 91.2 1480.5 96.2 1481.2 103.6 1481.9 113.2 1482.6 124.7 1483.2 138.0 1483.9 152.7 1484.6 168.6 1485.3 185.1 1486.0 202.0 1486.7 218.8 1487.4 235.3 1488.1 251.0 1488.7 265.5 1489.4 278.5 1490.1 289.8 1490.8 299.1 1491.5 306.1 1492.2 310.7 1492.9 312.9 1493.5 312.4 1494.2 309.5 1494.9 304.1 1495.6 296.3 1496.3 286.3 1497.0 274.5 1497.7 260.9 1498.3 246.0 1499.0 230.0 1499.7 213.4 1500.4 196.5 1501.1 179.6 1501.8 163.3 1502.5 147.8 1503.1 133.5 1503.8 120.8 1504.5 109.8 1505.2 100.9 1505.9 94.3 1506.6 90.1 1507.3 88.4 1508.0 89.3 1508.6 92.7 1509.3 98.5 1510.0 106.7 1510.7 117.0 1511.4 129.2 1512.1 143.0 1512.8 158.2 1513.4 174.3 1514.1 191.0 1514.8 207.9 1515.5 224.7 1516.2 240.9 1516.9 256.2 1517.6 270.2 1518.2 282.7 1518.9 293.3 1519.6 301.8 1520.3 308.0 1521.0 311.8 1521.7 313.0 1522.4 311.7 1523.0 307.9 1523.7 301.6 1524.4 293.0 1525.1 282.4 1525.8 269.9 1526.5 255.8 1527.2 240.5 1527.8 224.2 1528.5 207.5 1529.2 190.5 1529.9 173.8 1530.6 157.8 1531.3 142.7 1532.0 128.9 1532.7 116.7 1533.3 106.5 1534.0 98.3 1534.7 92.6 1535.4 89.2 1536.1 88.4 1536.8 90.2 1537.5 94.5 1538.1 101.1 1538.8 110.1 1539.5 121.1 1540.2 133.9 1540.9 148.2 1541.6 163.7 1542.3 180.1 1542.9 196.9 1543.6 213.8 1544.3 230.4 1545.0 246.4 1545.7 261.3 1546.4 274.8 1547.1 286.6 1547.7 296.5 1548.4 304.2 1549.1 309.6 1549.8 312.5 1550.5 312.8 1551.2 310.6 1551.9 305.9 1552.6 298.8 1553.2 289.5 1553.9 278.2 1554.6 265.1 1555.3 250.5 1556.0 234.9 1556.7 218.4 1557.4 201.5 1558.0 184.6 1558.7 168.1 1559.4 152.3 1560.1 137.7 1560.8 124.4 1561.5 112.9 1562.2 103.4 1562.8 96.1 1563.5 91.1 1564.2 88.7 1564.9 88.8 1565.6 91.4 1566.3 96.5 1567.0 104.0 1567.6 113.7 1568.3 125.4 1569.0 138.7 1569.7 153.5 1570.4 169.4 1571.1 185.9 1571.8 202.8 1572.5 219.7 1573.1 236.1 1573.8 251.7 1574.5 266.2 1575.2 279.1 1575.9 290.3 1576.6 299.5 1577.3 306.4 1577.9 310.9 1578.6 312.9 1579.3 312.3 1580.0 309.3 1580.7 303.7 1581.4 295.8 1582.1 285.8 1582.7 273.8 1583.4 260.2 1584.1 245.2 1584.8 229.2 1585.5 212.5 1586.2 195.6 1586.9 178.8 1587.5 162.5 1588.2 147.0 1588.9 132.8 1589.6 120.2 1590.3 109.3 1591.0 100.5 1591.7 94.0 1592.4 90.0 1593.0 88.4 1593.7 89.4 1594.4 92.9 1595.1 98.9 1595.8 107.2 1596.5 117.6 1597.2 129.9 1597.8 143.8 1598.5 159.0 1599.2 175.1 1599.9 191.8 1600.6 208.8 1601.3 225.5 1602.0 241.7 1602.6 256.9 1603.3 270.9 1604.0 283.3 1604.7 293.8 1605.4 302.2 1606.1 308.2 1606.8 311.9 1607.4 313.0 1608.1 311.6 1608.8 307.6 1609.5 301.2 1610.2 292.5 1610.9 281.8 1611.6 269.2 1612.3 255.0 1612.9 239.7 1613.6 223.4 1614.3 206.6 1615.0 189.7 1615.7 173.0 1616.4 157.0 1617.1 141.9 1617.7 128.2 1618.4 116.1 1619.1 106.0 1619.8 98.0 1620.5 92.3 1621.2 89.1 1621.9 88.5 1622.5 90.4 1623.2 94.7 1623.9 101.5 1624.6 110.6 1625.3 121.7 1626.0 134.6 1626.7 149.0 1627.3 164.5 1628.0 180.9 1628.7 197.8 1629.4 214.7 1630.1 231.3 1630.8 247.2 1631.5 262.0 1632.2 275.4 1632.8 287.2 1633.5 297.0 1634.2 304.6 1634.9 309.8 1635.6 312.6 1636.3 312.8 1637.0 310.5 1637.6 305.6 1638.3 298.4 1639.0 289.0 1639.7 277.6 1640.4 264.4 1641.1 249.8 1641.8 234.0 1642.4 217.5 1643.1 200.7 1643.8 183.8 1644.5 167.3 1645.2 151.6 1645.9 136.9 1646.6 123.8 1647.2 112.3 1647.9 102.9 1648.6 95.7 1649.3 90.9 1650.0 88.6 1650.7 88.8 1651.4 91.6 1652.1 96.9 1652.7 104.5 1653.4 114.3 1654.1 126.0 1654.8 139.5 1655.5 154.3 1656.2 170.2 1656.9 186.8 1657.5 203.7 1658.2 220.5 1658.9 236.9 1659.6 252.5 1660.3 266.9 1661.0 279.8 1661.7 290.9 1662.3 299.9 1663.0 306.7 1663.7 311.1 1664.4 312.9 1665.1 312.3 1665.8 309.0 1666.5 303.4 1667.1 295.4 1667.8 285.2 1668.5 273.1 1669.2 259.4 1669.9 244.4 1670.6 228.3 1671.3 211.6 1672.0 194.7 1672.6 177.9 1673.3 161.7 1674.0 146.3 1674.7 132.1 1675.4 119.6 1676.1 108.8 1676.8 100.2 1677.4 93.8 1678.1 89.8 1678.8 88.4 1679.5 89.5 1680.2 93.2 1680.9 99.3 1681.6 107.7 1682.2 118.2 1682.9 130.6 1683.6 144.5 1684.3 159.8 1685.0 176.0 1685.7 192.7 1686.4 209.6 1687.0 226.4 1687.7 242.5 1688.4 257.7 1689.1 271.6 1689.8 283.9 1690.5 294.3 1691.2 302.5 1691.9 308.5 1692.5 312.0 1693.2 313.0 1693.9 311.4 1694.6 307.3 1695.3 300.8 1696.0 292.0 1696.7 281.2 1697.3 268.5 1698.0 254.3 1698.7 238.8 1699.4 222.5" fill="none" stroke="#a8ac3c" stroke-width="1.05" opacity="0.92" stroke-linejoin="round"/>
<polyline points="327.0 255.6 327.7 237.8 328.4 217.8 329.1 211.9 329.7 200.1 330.4 184.1 331.1 159.7 331.8 149.8 332.5 121.5 333.2 115.3 333.9 116.1 334.5 115.0 335.2 118.5 335.9 118.0 336.6 120.3 337.3 110.6 338.0 113.7 338.7 123.5 339.4 121.8 340.0 134.6 340.7 137.6 341.4 148.5 342.1 173.8 342.8 172.7 343.5 190.8 344.2 216.0 344.8 227.8 345.5 250.0 346.2 270.2 346.9 273.8 347.6 286.4 348.3 285.2 349.0 285.3 349.6 291.0 350.3 290.1 351.0 301.2 351.7 276.8 352.4 285.0 353.1 281.5 353.8 281.9 354.4 276.4 355.1 275.7 355.8 263.0 356.5 238.8 357.2 226.2 357.9 192.5 358.6 179.0 359.3 172.3 359.9 153.0 360.6 140.5 361.3 136.4 362.0 131.5 362.7 116.7 363.4 121.9 364.1 117.0 364.7 120.6 365.4 111.9 366.1 112.7 366.8 121.8 367.5 130.9 368.2 135.8 368.9 150.5 369.5 158.1 370.2 171.0 370.9 181.8 371.6 199.3 372.3 220.8 373.0 245.9 373.7 251.4 374.3 266.7 375.0 272.4 375.7 281.3 376.4 287.8 377.1 294.3 377.8 295.1 378.5 294.3 379.2 311.6 379.8 302.0 380.5 297.0 381.2 275.5 381.9 278.1 382.6 279.5 383.3 278.4 384.0 250.0 384.6 240.3 385.3 222.0 386.0 216.1 386.7 201.1 387.4 192.5 388.1 170.7 388.8 160.4 389.4 151.2 390.1 140.5 390.8 144.2 391.5 141.6 392.2 136.6 392.9 131.4 393.6 110.7 394.2 116.7 394.9 109.4 395.6 128.6 396.3 134.7 397.0 137.4 397.7 158.1 398.4 161.2 399.1 173.9 399.7 181.2 400.4 191.8 401.1 216.0 401.8 236.4 402.5 264.7 403.2 277.0 403.9 282.9 404.5 286.7 405.2 298.1 405.9 284.8 406.6 282.0 407.3 284.1 408.0 291.6 408.7 294.7 409.3 292.5 410.0 300.7 410.7 287.2 411.4 261.9 412.1 251.2 412.8 233.6 413.5 224.3 414.1 210.5 414.8 208.0 415.5 197.7 416.2 171.7 416.9 161.6 417.6 134.1 418.3 137.6 419.0 130.2 419.6 118.8 420.3 107.6 421.0 113.5 421.7 106.6 422.4 101.6 423.1 101.1 423.8 93.9 424.4 93.1 425.1 114.9 425.8 110.7 426.5 129.9 427.2 154.9 427.9 173.3 428.6 198.2 429.2 205.8 429.9 237.3 430.6 242.2 431.3 261.7 432.0 287.0 432.7 281.6 433.4 296.2 434.0 304.6 434.7 295.6 435.4 301.4 436.1 297.2 436.8 289.7 437.5 296.4 438.2 284.9 438.9 304.4 439.5 285.4 440.2 288.0 440.9 283.6 441.6 265.3 442.3 237.2 443.0 217.4 443.7 216.9 444.3 181.0 445.0 170.6 445.7 150.1 446.4 158.2 447.1 130.2 447.8 140.8 448.5 142.7 449.1 127.1 449.8 106.7 450.5 112.0 451.2 107.2 451.9 115.2 452.6 121.9 453.3 125.9 453.9 126.9 454.6 134.7 455.3 146.5 456.0 160.7 456.7 170.6 457.4 198.1 458.1 213.0 458.8 228.6 459.4 235.3 460.1 248.1 460.8 244.6 461.5 266.5 462.2 265.5 462.9 276.4 463.6 285.3 464.2 299.7 464.9 298.9 465.6 308.9 466.3 303.0 467.0 301.6 467.7 293.8 468.4 288.8 469.0 282.4 469.7 267.7 470.4 261.8 471.1 236.3 471.8 221.6 472.5 196.2 473.2 185.4 473.8 170.5 474.5 162.3 475.2 148.0 475.9 137.8 476.6 119.3 477.3 112.8 478.0 106.1 478.7 110.8 479.3 113.5 480.0 108.5 480.7 128.4 481.4 130.6 482.1 127.6 482.8 146.5 483.5 138.3 484.1 148.7 484.8 153.9 485.5 167.4 486.2 193.0 486.9 217.3 487.6 244.5 488.3 243.8 488.9 249.2 489.6 265.5 490.3 272.9 491.0 277.8 491.7 282.1 492.4 284.8 493.1 295.7 493.7 291.8 494.4 282.9 495.1 285.2 495.8 275.4 496.5 269.3 497.2 266.7 497.9 265.1 498.6 248.6 499.2 237.0 499.9 227.5 500.6 200.1 501.3 184.0 502.0 164.6 502.7 150.5 503.4 141.8 504.0 146.5 504.7 143.4 505.4 131.4 506.1 127.6 506.8 133.9 507.5 128.5 508.2 129.4 508.8 126.6 509.5 125.6 510.2 133.5 510.9 147.4 511.6 143.2 512.3 158.1 513.0 163.3 513.6 181.6 514.3 195.0 515.0 215.5 515.7 229.5 516.4 250.3 517.1 265.3 517.8 273.7 518.4 287.1 519.1 290.2 519.8 292.2 520.5 306.7 521.2 306.7 521.9 300.9 522.6 293.1 523.3 288.4 523.9 286.5 524.6 272.2 525.3 279.7 526.0 271.5 526.7 257.5 527.4 243.8 528.1 234.8 528.7 219.7 529.4 198.3 530.1 184.8 530.8 169.2 531.5 150.3 532.2 134.8 532.9 132.0 533.5 134.7 534.2 117.9 534.9 125.4 535.6 123.7 536.3 122.7 537.0 119.8 537.7 122.2 538.3 107.3 539.0 113.8 539.7 121.7 540.4 129.6 541.1 147.1 541.8 162.9 542.5 170.0 543.2 189.6 543.8 211.2 544.5 223.0 545.2 247.2 545.9 261.6 546.6 282.3 547.3 289.7 548.0 294.8 548.6 291.3 549.3 289.3 550.0 300.2 550.7 303.3 551.4 289.9 552.1 296.7 552.8 283.3 553.4 277.8 554.1 283.6 554.8 281.3 555.5 255.5 556.2 249.3 556.9 221.1 557.6 212.3 558.2 186.5 558.9 171.5 559.6 156.4 560.3 147.0 561.0 141.2 561.7 135.3 562.4 132.6 563.1 131.5 563.7 126.7 564.4 113.4 565.1 111.0 565.8 98.4 566.5 111.3 567.2 115.6 567.9 116.2 568.5 124.9 569.2 136.6 569.9 154.5 570.6 168.3 571.3 193.2 572.0 207.3 572.7 212.6 573.3 234.7 574.0 232.1 574.7 261.3 575.4 282.8 576.1 283.6 576.8 294.9 577.5 301.1 578.1 289.6 578.8 304.0 579.5 315.3 580.2 302.3 580.9 292.6 581.6 289.5 582.3 282.6 583.0 277.1 583.6 266.9 584.3 258.0 585.0 241.2 585.7 220.4 586.4 214.4 587.1 191.0 587.8 175.6 588.4 158.9 589.1 141.1 589.8 129.1 590.5 126.3 591.2 123.6 591.9 112.8 592.6 117.5 593.2 121.0 593.9 125.2 594.6 120.2 595.3 129.6 596.0 135.1 596.7 140.0 597.4 149.5 598.0 164.9 598.7 172.3 599.4 177.5 600.1 193.6 600.8 207.7 601.5 227.0 602.2 239.6 602.9 255.8 603.5 264.2 604.2 284.1 604.9 286.4 605.6 298.0 606.3 299.3 607.0 298.9 607.7 304.6 608.3 308.5 609.0 296.3 609.7 299.8 610.4 280.5 611.1 271.8 611.8 267.7 612.5 259.6 613.1 242.4 613.8 227.6 614.5 217.4 615.2 211.6 615.9 181.5 616.6 159.7 617.3 139.1 617.9 130.0 618.6 130.2 619.3 114.3 620.0 112.4 620.7 121.8 621.4 122.7 622.1 125.9 622.8 127.6 623.4 128.2 624.1 135.4 624.8 133.2 625.5 128.1 626.2 144.0 626.9 155.8 627.6 170.9 628.2 176.5 628.9 200.4 629.6 212.1 630.3 230.8 631.0 241.9 631.7 262.3 632.4 268.8 633.0 273.1 633.7 291.4 634.4 288.4 635.1 293.5 635.8 290.3 636.5 287.9 637.2 291.3 637.8 296.0 638.5 287.8 639.2 298.0 639.9 280.6 640.6 262.5 641.3 246.9 642.0 243.6 642.7 213.7 643.3 215.0 644.0 193.5 644.7 180.5 645.4 148.9 646.1 148.3 646.8 132.6 647.5 134.7 648.1 137.6 648.8 130.1 649.5 128.1 650.2 128.7 650.9 126.5 651.6 123.9 652.3 119.9 652.9 119.7 653.6 131.3 654.3 128.6 655.0 144.8 655.7 145.6 656.4 176.0 657.1 188.0 657.7 204.5 658.4 213.0 659.1 226.8 659.8 240.7 660.5 248.9 661.2 256.8 661.9 277.3 662.6 279.6 663.2 280.3 663.9 287.0 664.6 287.1 665.3 296.0 666.0 300.1 666.7 293.0 667.4 286.3 668.0 275.0 668.7 271.8 669.4 256.9 670.1 249.4 670.8 239.4 671.5 222.2 672.2 225.1 672.8 182.0 673.5 169.6 674.2 152.2 674.9 153.4 675.6 138.3 676.3 133.4 677.0 127.0 677.6 110.0 678.3 114.1 679.0 106.7 679.7 113.4 680.4 129.0 681.1 110.8 681.8 132.3 682.5 139.9 683.1 136.6 683.8 150.8 684.5 150.6 685.2 191.7 685.9 191.5 686.6 208.6 687.3 234.3 687.9 245.6 688.6 252.2 689.3 263.0 690.0 273.8 690.7 264.9 691.4 270.7 692.1 281.1 692.7 289.6 693.4 284.1 694.1 275.6 694.8 284.6 695.5 281.7 696.2 285.9 696.9 286.2 697.5 280.4 698.2 259.2 698.9 240.0 699.6 244.5 700.3 222.7 701.0 212.4 701.7 192.9 702.4 175.6 703.0 167.2 703.7 145.3 704.4 129.1 705.1 131.9 705.8 134.6 706.5 130.3 707.2 122.0 707.8 130.4 708.5 132.8 709.2 131.6 709.9 138.1 710.6 125.7 711.3 131.5 712.0 142.7 712.6 165.1 713.3 169.6 714.0 198.9 714.7 205.7 715.4 218.6 716.1 238.4 716.8 251.2 717.4 262.2 718.1 258.6 718.8 271.4 719.5 274.8 720.2 280.7 720.9 293.3 721.6 294.5 722.3 295.6 722.9 297.3 723.6 283.8 724.3 285.9 725.0 285.9 725.7 288.5 726.4 260.6 727.1 237.3 727.7 225.2 728.4 203.4 729.1 191.7 729.8 172.7 730.5 170.0 731.2 168.7 731.9 152.7 732.5 156.1 733.2 138.9 733.9 130.9 734.6 117.0 735.3 109.9 736.0 123.5 736.7 117.5 737.3 112.8 738.0 134.1 738.7 138.8 739.4 146.9 740.1 149.3 740.8 155.2 741.5 155.6 742.2 167.9 742.8 188.8 743.5 201.7 744.2 221.1 744.9 239.1 745.6 256.0 746.3 261.9 747.0 276.7 747.6 285.4 748.3 299.5 749.0 292.4 749.7 292.0 750.4 285.7 751.1 289.1 751.8 290.1 752.4 294.2 753.1 281.3 753.8 291.4 754.5 270.9 755.2 268.0 755.9 250.9 756.6 240.3 757.2 219.1 757.9 195.2 758.6 193.5 759.3 185.8 760.0 156.2 760.7 142.3 761.4 132.1 762.1 124.9 762.7 121.4 763.4 122.2 764.1 120.4 764.8 116.2 765.5 117.1 766.2 104.2 766.9 106.1 767.5 116.9 768.2 134.7 768.9 127.2 769.6 150.4 770.3 156.6 771.0 183.1 771.7 196.6 772.3 217.7 773.0 220.0 773.7 245.3 774.4 260.0 775.1 264.5 775.8 275.1 776.5 289.7 777.1 311.1 777.8 311.0 778.5 315.8 779.2 306.5 779.9 313.0 780.6 307.6 781.3 299.2 782.0 287.3 782.6 271.7 783.3 260.9 784.0 263.6 784.7 242.1 785.4 229.3 786.1 203.9 786.8 189.7 787.4 165.6 788.1 156.0 788.8 150.2 789.5 135.5 790.2 131.6 790.9 128.8 791.6 118.0 792.2 114.6 792.9 111.2 793.6 103.9 794.3 96.0 795.0 116.5 795.7 114.0 796.4 107.6 797.0 126.9 797.7 147.0 798.4 157.9 799.1 179.7 799.8 178.7 800.5 188.0 801.2 207.4 801.9 220.9 802.5 242.8 803.2 249.2 803.9 279.6 804.6 280.4 805.3 288.4 806.0 295.9 806.7 291.4 807.3 290.9 808.0 297.8 808.7 297.3 809.4 303.9 810.1 291.3 810.8 296.0 811.5 280.8 812.1 267.2 812.8 266.1 813.5 241.9 814.2 222.1 814.9 206.7 815.6 186.9 816.3 172.7 816.9 161.4 817.6 148.8 818.3 134.4 819.0 135.9 819.7 129.7 820.4 123.6 821.1 111.8 821.8 104.6 822.4 116.9 823.1 132.1 823.8 133.1 824.5 147.1 825.2 140.5 825.9 159.5 826.6 157.2 827.2 171.1 827.9 187.4 828.6 193.9 829.3 212.4 830.0 241.6 830.7 235.2 831.4 240.3 832.0 256.6 832.7 281.4 833.4 272.9 834.1 273.3 834.8 273.8 835.5 283.9 836.2 284.3 836.8 284.3 837.5 279.2 838.2 267.7 838.9 283.2 839.6 272.1 840.3 254.8 841.0 252.4 841.7 243.1 842.3 221.9 843.0 221.5 843.7 190.9 844.4 183.8 845.1 155.6 845.8 146.6 846.5 131.3 847.1 128.4 847.8 116.9 848.5 101.4 849.2 109.5 849.9 102.8 850.6 103.9 851.3 108.8 851.9 109.5 852.6 97.8 853.3 97.2 854.0 114.4 854.7 127.0 855.4 126.0 856.1 159.0 856.7 176.1 857.4 200.0 858.1 217.9 858.8 236.8 859.5 240.1 860.2 262.4 860.9 264.6 861.5 270.1 862.2 278.4 862.9 279.9 863.6 286.7 864.3 292.7 865.0 287.5 865.7 288.7 866.4 289.8 867.0 286.7 867.7 285.5 868.4 277.4 869.1 251.9 869.8 259.4 870.5 248.4 871.2 230.9 871.8 221.4 872.5 210.1 873.2 173.9 873.9 170.0 874.6 154.2 875.3 137.3 876.0 131.8 876.6 133.8 877.3 143.9 878.0 143.6 878.7 133.2 879.4 124.1 880.1 121.4 880.8 134.6 881.4 122.2 882.1 129.5 882.8 125.8 883.5 128.3 884.2 150.5 884.9 157.5 885.6 184.7 886.3 199.7 886.9 218.7 887.6 242.1 888.3 247.9 889.0 258.9 889.7 261.5 890.4 282.7 891.1 282.8 891.7 278.4 892.4 282.6 893.1 291.6 893.8 288.5 894.5 308.6 895.2 290.6 895.9 292.4 896.5 293.4 897.2 278.3 897.9 261.7 898.6 246.4 899.3 217.8 900.0 210.9 900.7 204.9 901.3 184.5 902.0 167.1 902.7 172.0 903.4 152.8 904.1 140.2 904.8 133.3 905.5 117.6 906.2 120.1 906.8 104.5 907.5 116.8 908.2 115.1 908.9 106.7 909.6 110.5 910.3 121.5 911.0 120.8 911.6 145.3 912.3 148.0 913.0 146.6 913.7 169.0 914.4 180.5 915.1 202.2 915.8 226.7 916.4 236.0 917.1 244.9 917.8 259.4 918.5 275.8 919.2 292.7 919.9 291.9 920.6 289.6 921.2 292.4 921.9 313.5 922.6 308.0 923.3 300.0 924.0 294.1 924.7 299.5 925.4 289.8 926.1 286.3 926.7 274.9 927.4 259.7 928.1 228.5 928.8 204.8 929.5 191.7 930.2 171.8 930.9 178.4 931.5 161.8 932.2 128.9 932.9 122.4 933.6 117.9 934.3 130.2 935.0 127.3 935.7 125.1 936.3 125.5 937.0 126.1 937.7 121.8 938.4 108.5 939.1 125.3 939.8 122.7 940.5 134.2 941.1 136.4 941.8 161.2 942.5 176.6 943.2 188.4 943.9 208.5 944.6 223.2 945.3 237.0 946.0 268.8 946.6 286.1 947.3 287.3 948.0 302.4 948.7 315.7 949.4 308.5 950.1 304.5 950.8 300.9 951.4 297.7 952.1 297.7 952.8 286.6 953.5 299.1 954.2 287.7 954.9 278.8 955.6 263.7 956.2 257.8 956.9 238.3 957.6 233.3 958.3 220.7 959.0 191.7 959.7 170.4 960.4 157.4 961.0 139.1 961.7 138.0 962.4 135.3 963.1 127.4 963.8 119.5 964.5 120.4 965.2 117.6 965.9 120.1 966.5 120.4 967.2 131.3 967.9 132.9 968.6 135.0 969.3 153.8 970.0 154.8 970.7 172.6 971.3 178.1 972.0 199.5 972.7 203.9 973.4 224.8 974.1 246.8 974.8 255.0 975.5 268.4 976.1 277.6 976.8 287.1 977.5 294.3 978.2 299.3 978.9 301.6 979.6 311.7 980.3 301.0 980.9 293.9 981.6 294.7 982.3 282.5 983.0 285.0 983.7 268.5 984.4 261.6 985.1 238.7 985.8 234.4 986.4 218.5 987.1 192.0 987.8 174.6 988.5 163.7 989.2 153.0 989.9 146.4 990.6 133.9 991.2 123.0 991.9 129.1 992.6 115.2 993.3 113.5 994.0 117.4 994.7 124.1 995.4 117.0 996.0 122.2 996.7 124.9 997.4 119.0 998.1 144.6 998.8 152.4 999.5 168.9 1000.2 188.7 1000.8 203.8 1001.5 217.5 1002.2 228.7 1002.9 251.3 1003.6 250.3 1004.3 258.6 1005.0 274.2 1005.7 294.6 1006.3 306.4 1007.0 309.6 1007.7 297.2 1008.4 295.7 1009.1 289.7 1009.8 290.5 1010.5 295.3 1011.1 293.7 1011.8 281.1 1012.5 273.8 1013.2 253.3 1013.9 234.6 1014.6 205.5 1015.3 188.9 1015.9 170.6 1016.6 163.1 1017.3 153.4 1018.0 147.6 1018.7 140.1 1019.4 135.1 1020.1 121.1 1020.7 121.6 1021.4 119.6 1022.1 116.9 1022.8 123.5 1023.5 121.2 1024.2 115.8 1024.9 130.7 1025.6 125.2 1026.2 126.7 1026.9 143.6 1027.6 162.0 1028.3 171.5 1029.0 193.0 1029.7 210.8 1030.4 220.9 1031.0 245.6 1031.7 254.2 1032.4 264.6 1033.1 275.7 1033.8 291.7 1034.5 286.8 1035.2 293.9 1035.8 301.8 1036.5 306.9 1037.2 300.1 1037.9 280.8 1038.6 283.7 1039.3 277.1 1040.0 273.3 1040.6 265.4 1041.3 260.8 1042.0 247.5 1042.7 227.8 1043.4 200.2 1044.1 179.8 1044.8 164.7 1045.5 152.1 1046.1 138.7 1046.8 126.5 1047.5 120.6 1048.2 113.2 1048.9 106.4 1049.6 105.9 1050.3 112.3 1050.9 119.2 1051.6 113.2 1052.3 119.4 1053.0 123.8 1053.7 135.2 1054.4 131.9 1055.1 140.9 1055.7 145.0 1056.4 168.4 1057.1 162.5 1057.8 179.5 1058.5 196.9 1059.2 219.7 1059.9 234.1 1060.5 239.1 1061.2 265.3 1061.9 270.6 1062.6 263.5 1063.3 282.1 1064.0 281.8 1064.7 290.3 1065.4 279.9 1066.0 289.2 1066.7 296.5 1067.4 289.4 1068.1 287.7 1068.8 279.4 1069.5 277.9 1070.2 269.3 1070.8 241.8 1071.5 229.1 1072.2 200.6 1072.9 185.7 1073.6 162.6 1074.3 146.3 1075.0 137.0 1075.6 130.9 1076.3 124.8 1077.0 119.0 1077.7 110.3 1078.4 114.5 1079.1 88.4 1079.8 90.6 1080.4 103.6 1081.1 107.0 1081.8 119.4 1082.5 113.2 1083.2 113.6 1083.9 134.1 1084.6 147.3 1085.3 162.8 1085.9 188.6 1086.6 218.4 1087.3 222.1 1088.0 234.8 1088.7 263.5 1089.4 253.6 1090.1 264.1 1090.7 274.5 1091.4 289.0 1092.1 296.3 1092.8 291.4 1093.5 277.6 1094.2 272.0 1094.9 280.6 1095.5 275.9 1096.2 280.1 1096.9 261.4 1097.6 260.5 1098.3 251.1 1099.0 244.3 1099.7 227.9 1100.3 207.6 1101.0 193.2 1101.7 190.7 1102.4 169.6 1103.1 158.3 1103.8 144.6 1104.5 128.5 1105.2 134.4 1105.8 129.2 1106.5 122.6 1107.2 112.4 1107.9 110.3 1108.6 112.3 1109.3 107.0 1110.0 120.2 1110.6 114.2 1111.3 121.0 1112.0 128.0 1112.7 147.6 1113.4 162.4 1114.1 171.7 1114.8 191.8 1115.4 202.8 1116.1 226.7 1116.8 235.2 1117.5 242.9 1118.2 258.3 1118.9 280.8 1119.6 283.3 1120.2 293.7 1120.9 292.2 1121.6 292.3 1122.3 293.2 1123.0 301.9 1123.7 297.5 1124.4 295.9 1125.1 295.7 1125.7 294.6 1126.4 289.1 1127.1 265.8 1127.8 247.3 1128.5 225.2 1129.2 212.0 1129.9 193.0 1130.5 193.2 1131.2 164.0 1131.9 156.5 1132.6 147.6 1133.3 136.6 1134.0 131.9 1134.7 120.8 1135.3 119.2 1136.0 116.4 1136.7 111.7 1137.4 111.9 1138.1 114.7 1138.8 123.2 1139.5 128.0 1140.1 142.3 1140.8 160.6 1141.5 175.3 1142.2 176.5 1142.9 185.6 1143.6 197.4 1144.3 220.9 1145.0 239.7 1145.6 259.6 1146.3 263.7 1147.0 271.3 1147.7 292.2 1148.4 289.1 1149.1 293.1 1149.8 294.6 1150.4 287.0 1151.1 297.5 1151.8 299.9 1152.5 291.8 1153.2 295.0 1153.9 284.8 1154.6 276.4 1155.2 257.6 1155.9 254.1 1156.6 231.0 1157.3 221.4 1158.0 209.3 1158.7 194.9 1159.4 175.0 1160.0 144.8 1160.7 146.3 1161.4 125.3 1162.1 116.6 1162.8 124.5 1163.5 118.1 1164.2 120.2 1164.9 125.5 1165.5 116.8 1166.2 117.7 1166.9 116.4 1167.6 120.8 1168.3 136.4 1169.0 153.1 1169.7 163.6 1170.3 179.6 1171.0 184.1 1171.7 195.7 1172.4 215.9 1173.1 216.3 1173.8 233.6 1174.5 253.0 1175.1 274.9 1175.8 281.4 1176.5 296.9 1177.2 295.9 1177.9 312.4 1178.6 304.4 1179.3 306.1 1179.9 300.9 1180.6 298.0 1181.3 289.0 1182.0 283.0 1182.7 267.6 1183.4 263.2 1184.1 265.5 1184.8 248.1 1185.4 238.4 1186.1 216.2 1186.8 196.9 1187.5 171.4 1188.2 158.9 1188.9 144.5 1189.6 134.6 1190.2 128.1 1190.9 124.4 1191.6 125.7 1192.3 111.1 1193.0 111.3 1193.7 98.5 1194.4 109.4 1195.0 115.3 1195.7 109.8 1196.4 120.2 1197.1 127.5 1197.8 145.9 1198.5 159.7 1199.2 182.4 1199.8 192.9 1200.5 198.4 1201.2 219.7 1201.9 236.3 1202.6 245.1 1203.3 259.4 1204.0 270.1 1204.6 272.4 1205.3 293.2 1206.0 291.6 1206.7 287.5 1207.4 282.2 1208.1 291.2 1208.8 293.5 1209.5 307.4 1210.1 298.4 1210.8 285.0 1211.5 271.3 1212.2 269.4 1212.9 262.5 1213.6 242.5 1214.3 226.7 1214.9 201.7 1215.6 175.1 1216.3 163.9 1217.0 163.1 1217.7 163.0 1218.4 144.1 1219.1 139.3 1219.7 130.0 1220.4 124.5 1221.1 125.2 1221.8 127.4 1222.5 127.5 1223.2 117.6 1223.9 124.8 1224.5 130.5 1225.2 142.2 1225.9 157.4 1226.6 156.3 1227.3 150.4 1228.0 176.4 1228.7 178.8 1229.4 201.9 1230.0 216.3 1230.7 221.7 1231.4 256.8 1232.1 259.3 1232.8 278.2 1233.5 282.4 1234.2 292.1 1234.8 306.4 1235.5 308.6 1236.2 305.5 1236.9 297.7 1237.6 297.0 1238.3 286.3 1239.0 289.1 1239.6 283.3 1240.3 262.2 1241.0 255.4 1241.7 256.7 1242.4 231.3 1243.1 216.5 1243.8 201.5 1244.4 190.1 1245.1 182.3 1245.8 174.0 1246.5 149.9 1247.2 144.7 1247.9 125.7 1248.6 118.1 1249.3 121.9 1249.9 118.7 1250.6 102.6 1251.3 108.1 1252.0 106.2 1252.7 116.4 1253.4 122.1 1254.1 108.8 1254.7 125.1 1255.4 127.2 1256.1 149.8 1256.8 161.1 1257.5 182.7 1258.2 196.7 1258.9 227.5 1259.5 246.1 1260.2 249.8 1260.9 260.0 1261.6 266.3 1262.3 283.3 1263.0 289.2 1263.7 280.5 1264.3 288.1 1265.0 288.3 1265.7 300.9 1266.4 292.5 1267.1 283.5 1267.8 284.3 1268.5 279.0 1269.2 263.3 1269.8 261.7 1270.5 253.9 1271.2 243.1 1271.9 202.9 1272.6 191.9 1273.3 166.5 1274.0 161.2 1274.6 150.1 1275.3 141.4 1276.0 136.5 1276.7 123.2 1277.4 119.0 1278.1 101.8 1278.8 103.4 1279.4 97.2 1280.1 106.4 1280.8 108.9 1281.5 118.8 1282.2 129.4 1282.9 134.2 1283.6 147.2 1284.2 157.9 1284.9 159.4 1285.6 173.0 1286.3 200.5 1287.0 224.6 1287.7 236.9 1288.4 242.4 1289.1 256.9 1289.7 273.2 1290.4 284.5 1291.1 278.7 1291.8 287.8 1292.5 293.7 1293.2 292.5 1293.9 293.5 1294.5 287.0 1295.2 278.2 1295.9 274.1 1296.6 271.8 1297.3 262.1 1298.0 259.1 1298.7 244.9 1299.3 237.5 1300.0 207.8 1300.7 198.4 1301.4 177.0 1302.1 162.4 1302.8 158.0 1303.5 144.9 1304.1 139.8 1304.8 138.8 1305.5 124.8 1306.2 124.8 1306.9 125.5 1307.6 111.7 1308.3 119.7 1309.0 117.0 1309.6 127.0 1310.3 122.3 1311.0 127.4 1311.7 138.3 1312.4 153.0 1313.1 169.6 1313.8 172.9 1314.4 193.6 1315.1 200.0 1315.8 220.5 1316.5 240.8 1317.2 255.3 1317.9 266.7 1318.6 269.7 1319.2 287.4 1319.9 289.8 1320.6 302.0 1321.3 298.2 1322.0 293.0 1322.7 300.2 1323.4 283.8 1324.0 293.0 1324.7 278.1 1325.4 262.7 1326.1 272.9 1326.8 256.3 1327.5 243.5 1328.2 236.5 1328.9 227.3 1329.5 226.6 1330.2 212.7 1330.9 199.7 1331.6 178.4 1332.3 156.9 1333.0 144.3 1333.7 119.8 1334.3 123.0 1335.0 126.4 1335.7 116.1 1336.4 111.6 1337.1 111.0 1337.8 132.1 1338.5 131.0 1339.1 134.7 1339.8 142.3 1340.5 153.4 1341.2 166.3 1341.9 167.7 1342.6 179.6 1343.3 195.4 1343.9 224.5 1344.6 233.5 1345.3 251.2 1346.0 261.8 1346.7 278.6 1347.4 280.2 1348.1 284.4 1348.8 281.0 1349.4 281.6 1350.1 271.9 1350.8 288.0 1351.5 290.1 1352.2 279.4 1352.9 275.0 1353.6 271.6 1354.2 269.2 1354.9 248.1 1355.6 251.8 1356.3 236.2 1357.0 225.4 1357.7 210.3 1358.4 199.5 1359.0 178.5 1359.7 158.2 1360.4 151.7 1361.1 144.1 1361.8 135.1 1362.5 107.8 1363.2 118.2 1363.8 108.6 1364.5 107.1 1365.2 102.7 1365.9 102.3 1366.6 101.4 1367.3 117.3 1368.0 125.8 1368.7 118.5 1369.3 123.3 1370.0 142.4 1370.7 161.8 1371.4 171.8 1372.1 190.6 1372.8 221.9 1373.5 225.1 1374.1 240.2 1374.8 260.2 1375.5 267.9 1376.2 273.7 1376.9 287.6 1377.6 296.2 1378.3 294.2 1378.9 296.2 1379.6 287.1 1380.3 277.6 1381.0 273.4 1381.7 273.0 1382.4 268.5 1383.1 263.3 1383.7 256.6 1384.4 245.9 1385.1 241.1 1385.8 226.8 1386.5 205.8 1387.2 192.4 1387.9 174.6 1388.6 148.4 1389.2 148.2 1389.9 132.6 1390.6 128.7 1391.3 118.3 1392.0 110.8 1392.7 108.4 1393.4 106.5 1394.0 108.3 1394.7 111.3 1395.4 123.6 1396.1 124.0 1396.8 126.2 1397.5 129.8 1398.2 136.0 1398.8 155.6 1399.5 181.0 1400.2 188.0 1400.9 203.8 1401.6 211.7 1402.3 224.4 1403.0 229.8 1403.6 238.9 1404.3 258.9 1405.0 263.3 1405.7 272.3 1406.4 289.3 1407.1 303.5 1407.8 302.5 1408.5 295.3 1409.1 307.4 1409.8 294.4 1410.5 302.8 1411.2 287.0 1411.9 286.8 1412.6 273.9 1413.3 259.6 1413.9 258.0 1414.6 237.7 1415.3 214.9 1416.0 194.5 1416.7 172.7 1417.4 163.9 1418.1 151.4 1418.7 143.8 1419.4 136.9 1420.1 121.8 1420.8 113.1 1421.5 105.4 1422.2 107.8 1422.9 116.1 1423.5 124.5 1424.2 117.6 1424.9 116.7 1425.6 130.2 1426.3 136.7 1427.0 141.9 1427.7 149.0 1428.4 156.7 1429.0 183.8 1429.7 200.0 1430.4 220.3 1431.1 233.9 1431.8 255.4 1432.5 267.0 1433.2 270.6 1433.8 283.9 1434.5 287.3 1435.2 294.5 1435.9 299.5 1436.6 292.7 1437.3 294.1 1438.0 297.8 1438.6 285.0 1439.3 293.7 1440.0 296.2 1440.7 282.8 1441.4 260.6 1442.1 244.2 1442.8 233.0 1443.4 217.4 1444.1 196.7 1444.8 186.6 1445.5 166.7 1446.2 156.0 1446.9 148.1 1447.6 131.0 1448.3 124.4 1448.9 120.9 1449.6 130.8 1450.3 134.4 1451.0 131.6 1451.7 121.3 1452.4 126.1 1453.1 116.2 1453.7 113.2 1454.4 128.9 1455.1 143.9 1455.8 149.6 1456.5 166.5 1457.2 164.3 1457.9 188.7 1458.5 201.2 1459.2 222.2 1459.9 243.4 1460.6 263.4 1461.3 270.0 1462.0 274.9 1462.7 271.2 1463.3 273.4 1464.0 290.2 1464.7 301.5 1465.4 306.3 1466.1 299.2 1466.8 290.3 1467.5 302.8 1468.2 288.8 1468.8 277.8 1469.5 272.8 1470.2 259.3 1470.9 237.9 1471.6 230.6 1472.3 218.0 1473.0 190.2 1473.6 179.9 1474.3 164.2 1475.0 157.0 1475.7 126.4 1476.4 136.2 1477.1 117.8 1477.8 104.6 1478.4 114.9 1479.1 114.9 1479.8 119.8 1480.5 113.8 1481.2 117.8 1481.9 117.3 1482.6 113.0 1483.2 125.4 1483.9 143.8 1484.6 154.6 1485.3 159.4 1486.0 180.5 1486.7 200.1 1487.4 221.1 1488.1 241.5 1488.7 254.4 1489.4 271.5 1490.1 272.1 1490.8 281.6 1491.5 289.8 1492.2 291.7 1492.9 298.1 1493.5 291.6 1494.2 286.8 1494.9 288.4 1495.6 298.3 1496.3 289.8 1497.0 297.8 1497.7 282.6 1498.3 276.0 1499.0 258.5 1499.7 242.3 1500.4 234.3 1501.1 215.5 1501.8 192.0 1502.5 175.2 1503.1 164.9 1503.8 157.9 1504.5 147.2 1505.2 145.6 1505.9 142.5 1506.6 131.2 1507.3 120.4 1508.0 105.5 1508.6 99.5 1509.3 104.8 1510.0 105.3 1510.7 125.1 1511.4 131.3 1512.1 126.8 1512.8 144.4 1513.4 155.9 1514.1 183.3 1514.8 200.7 1515.5 214.3 1516.2 224.6 1516.9 242.4 1517.6 253.2 1518.2 256.3 1518.9 275.7 1519.6 276.5 1520.3 275.1 1521.0 296.2 1521.7 306.4 1522.4 306.8 1523.0 305.6 1523.7 310.8 1524.4 283.4 1525.1 281.2 1525.8 279.6 1526.5 275.0 1527.2 262.5 1527.8 249.2 1528.5 246.9 1529.2 211.9 1529.9 197.6 1530.6 187.2 1531.3 169.5 1532.0 153.1 1532.7 141.0 1533.3 143.8 1534.0 121.3 1534.7 113.9 1535.4 103.6 1536.1 98.3 1536.8 106.7 1537.5 108.1 1538.1 119.6 1538.8 113.4 1539.5 115.8 1540.2 127.9 1540.9 140.0 1541.6 153.0 1542.3 175.3 1542.9 198.5 1543.6 205.8 1544.3 217.2 1545.0 225.3 1545.7 241.4 1546.4 251.3 1547.1 273.2 1547.7 279.7 1548.4 284.6 1549.1 277.4 1549.8 288.9 1550.5 277.2 1551.2 282.7 1551.9 295.3 1552.6 291.6 1553.2 287.0 1553.9 284.1 1554.6 277.4 1555.3 277.9 1556.0 268.7 1556.7 251.5 1557.4 233.9 1558.0 217.5 1558.7 194.3 1559.4 179.6 1560.1 175.1 1560.8 144.3 1561.5 122.0 1562.2 122.0 1562.8 113.1 1563.5 104.7 1564.2 105.0 1564.9 106.6 1565.6 99.4 1566.3 100.2 1567.0 107.5 1567.6 114.5 1568.3 123.3 1569.0 129.7 1569.7 148.0 1570.4 153.3 1571.1 167.0 1571.8 187.8 1572.5 186.7 1573.1 203.7 1573.8 225.0 1574.5 252.4 1575.2 265.9 1575.9 272.3 1576.6 294.0 1577.3 283.7 1577.9 276.4 1578.6 293.4 1579.3 299.7 1580.0 285.6 1580.7 279.2 1581.4 279.9 1582.1 282.1 1582.7 268.9 1583.4 278.2 1584.1 259.3 1584.8 256.0 1585.5 235.8 1586.2 211.2 1586.9 210.9 1587.5 181.9 1588.2 171.4 1588.9 143.3 1589.6 139.4 1590.3 131.2 1591.0 108.0 1591.7 112.8 1592.4 112.1 1593.0 112.9 1593.7 123.3 1594.4 126.5 1595.1 130.6 1595.8 116.3 1596.5 135.3 1597.2 142.1 1597.8 140.1 1598.5 152.5 1599.2 170.2 1599.9 188.0 1600.6 195.4 1601.3 225.9 1602.0 245.0 1602.6 253.8 1603.3 253.5 1604.0 262.0 1604.7 266.1 1605.4 285.2 1606.1 295.2 1606.8 301.1 1607.4 303.0 1608.1 298.3 1608.8 289.6 1609.5 282.8 1610.2 285.2 1610.9 278.2 1611.6 280.9 1612.3 260.8 1612.9 260.4 1613.6 246.7 1614.3 218.5 1615.0 215.2 1615.7 208.4 1616.4 183.2 1617.1 175.6 1617.7 170.7 1618.4 147.3 1619.1 142.8 1619.8 139.2 1620.5 132.4 1621.2 130.3 1621.9 123.0 1622.5 114.8 1623.2 121.5 1623.9 131.8 1624.6 111.8 1625.3 123.5 1626.0 123.7 1626.7 138.1 1627.3 142.0 1628.0 164.1 1628.7 192.6 1629.4 194.2 1630.1 224.3 1630.8 234.7 1631.5 249.7 1632.2 267.8 1632.8 282.6 1633.5 284.4 1634.2 288.7 1634.9 294.6 1635.6 298.7 1636.3 306.4 1637.0 288.5 1637.6 285.2 1638.3 289.0 1639.0 287.3 1639.7 292.8 1640.4 285.0 1641.1 265.2 1641.8 242.2 1642.4 232.7 1643.1 217.0 1643.8 197.9 1644.5 174.0 1645.2 171.6 1645.9 148.0 1646.6 155.3 1647.2 135.9 1647.9 140.2 1648.6 128.0 1649.3 116.4 1650.0 108.7 1650.7 115.8 1651.4 124.9 1652.1 126.0 1652.7 134.3 1653.4 134.7 1654.1 138.7 1654.8 147.7 1655.5 156.7 1656.2 164.3 1656.9 186.6 1657.5 209.4 1658.2 223.5 1658.9 244.6 1659.6 256.7 1660.3 281.0 1661.0 272.8 1661.7 274.0 1662.3 269.6 1663.0 283.5 1663.7 282.4 1664.4 287.3 1665.1 289.0 1665.8 290.5 1666.5 292.0 1667.1 285.2 1667.8 282.3 1668.5 283.6 1669.2 274.7 1669.9 254.4 1670.6 248.8 1671.3 233.8 1672.0 214.4 1672.6 181.3 1673.3 174.2 1674.0 165.1 1674.7 144.4 1675.4 131.8 1676.1 121.7 1676.8 101.9 1677.4 100.8 1678.1 113.8 1678.8 114.5 1679.5 103.8 1680.2 104.0 1680.9 120.1 1681.6 109.9 1682.2 118.5 1682.9 123.9 1683.6 139.9 1684.3 157.1 1685.0 175.4 1685.7 189.1 1686.4 206.7 1687.0 225.9 1687.7 240.4 1688.4 257.0 1689.1 271.1 1689.8 269.6 1690.5 281.5 1691.2 302.9 1691.9 301.0 1692.5 295.8 1693.2 297.2 1693.9 287.8 1694.6 274.5 1695.3 273.2 1696.0 258.4 1696.7 273.2 1697.3 273.2 1698.0 265.0 1698.7 240.4 1699.4 245.3" fill="none" stroke="#e8a53c" stroke-width="1.15" stroke-linejoin="round" opacity="0.86"/>
<path d="M326 85.5V316.1H1700.9V85.5" stroke="#fff" stroke-width="2.2" fill="none"/>
<path d="M327.0 317v4M348.4 317v2M369.9 317v2M391.3 317v2M412.8 317v4M434.2 317v2M455.7 317v2M477.1 317v2M498.6 317v4M520.0 317v2M541.5 317v2M562.9 317v2M584.3 317v4M605.8 317v2M627.2 317v2M648.7 317v2M670.1 317v4M691.6 317v2M713.0 317v2M734.5 317v2M755.9 317v4M777.3 317v2M798.8 317v2M820.2 317v2M841.7 317v4M863.1 317v2M884.6 317v2M906.0 317v2M927.5 317v4M948.9 317v2M970.4 317v2M991.8 317v2M1013.2 317v4M1034.7 317v2M1056.1 317v2M1077.6 317v2M1099.0 317v4M1120.5 317v2M1141.9 317v2M1163.4 317v2M1184.8 317v4M1206.2 317v2M1227.7 317v2M1249.1 317v2M1270.6 317v4M1292.0 317v2M1313.5 317v2M1334.9 317v2M1356.4 317v4M1377.8 317v2M1399.2 317v2M1420.7 317v2M1442.1 317v4M1463.6 317v2M1485.0 317v2M1506.5 317v2M1527.9 317v4M1549.4 317v2M1570.8 317v2M1592.3 317v2M1613.7 317v4M1635.1 317v2M1656.6 317v2M1678.0 317v2M1699.5 317v4M323 90.5H325M323 96.5H325M320.5 102.5H325M323 108.5H325M323 114.5H325M323 120.5H325M320.5 126.5H325M323 132.5H325M323 138.5H325M323 144.5H325M320.5 150.5H325M323 156.5H325M323 162.5H325M323 168.5H325M320.5 174.5H325M323 180.5H325M323 186.5H325M323 192.5H325M320.5 198.5H325M323 204.5H325M323 210.5H325M323 216.5H325M320.5 222.5H325M323 228.5H325M323 234.5H325M323 240.5H325M320.5 246.5H325M323 252.5H325M323 258.5H325M323 264.5H325M320.5 270.5H325M323 276.5H325M323 282.5H325M323 288.5H325M320.5 294.5H325M323 300.5H325M323 306.5H325M323 312.5H325" stroke="#aaa" stroke-width="1" fill="none"/>
<path d="M1702.5 102.5h2.500M1702.5 130.8h2.500M1702.5 159.1h2.500M1702.5 187.4h2.500M1702.5 215.7h2.500M1702.5 244.0h2.500M1702.5 272.3h2.500M1702.5 300.6h2.500" stroke="#6a6a6a" stroke-width="1.2" fill="none"/>
<text class="pl" x="318" y="106.5" text-anchor="end">25.55</text>
<text class="pl" x="318" y="130.5" text-anchor="end">25.5</text>
<text class="pl" x="318" y="154.5" text-anchor="end">25.45</text>
<text class="pl" x="318" y="178.5" text-anchor="end">25.4</text>
<text class="pl" x="318" y="202.5" text-anchor="end">25.35</text>
<text class="pl" x="318" y="226.5" text-anchor="end">25.3</text>
<text class="pl" x="318" y="250.5" text-anchor="end">25.25</text>
<text class="pl" x="318" y="274.5" text-anchor="end">25.2</text>
<text class="pl" x="318" y="298.5" text-anchor="end">25.15</text>
<text class="pl" x="1712" y="106.5" style="fill:#d4d43a;stroke:#d4d43a">-42</text>
<text class="pl" x="1712" y="134.8" style="fill:#d4d43a;stroke:#d4d43a">-44</text>
<text class="pl" x="1712" y="163.1" style="fill:#d4d43a;stroke:#d4d43a">-46</text>
<text class="pl" x="1712" y="191.4" style="fill:#d4d43a;stroke:#d4d43a">-48</text>
<text class="pl" x="1712" y="219.7" style="fill:#d4d43a;stroke:#d4d43a">-50</text>
<text class="pl" x="1712" y="248.0" style="fill:#d4d43a;stroke:#d4d43a">-52</text>
<text class="pl" x="1712" y="276.3" style="fill:#d4d43a;stroke:#d4d43a">-54</text>
<text class="pl" x="1712" y="304.6" style="fill:#d4d43a;stroke:#d4d43a">-56</text>
<text class="pl" x="329.2" y="334.8" text-anchor="middle">0</text>
<text class="pl" x="415.0" y="334.8" text-anchor="middle">0.000 1</text>
<text class="pl" x="500.8" y="334.8" text-anchor="middle">0.000 2</text>
<text class="pl" x="586.5" y="334.8" text-anchor="middle">0.000 3</text>
<text class="pl" x="672.3" y="334.8" text-anchor="middle">0.000 4</text>
<text class="pl" x="758.1" y="334.8" text-anchor="middle">0.000 5</text>
<text class="pl" x="843.9" y="334.8" text-anchor="middle">0.000 6</text>
<text class="pl" x="929.7" y="334.8" text-anchor="middle">0.000 7</text>
<text class="pl" x="1015.4" y="334.8" text-anchor="middle">0.000 8</text>
<text class="pl" x="1101.2" y="334.8" text-anchor="middle">0.000 9</text>
<text class="pl" x="1187.0" y="334.8" text-anchor="middle">0.001</text>
<text class="pl" x="1272.8" y="334.8" text-anchor="middle">0.001 1</text>
<text class="pl" x="1358.6" y="334.8" text-anchor="middle">0.001 2</text>
<text class="pl" x="1444.3" y="334.8" text-anchor="middle">0.001 3</text>
<text class="pl" x="1530.1" y="334.8" text-anchor="middle">0.001 4</text>
<text class="pl" x="1615.9" y="334.8" text-anchor="middle">0.001 5</text>
<text class="pl" x="1701.7" y="334.8" text-anchor="middle">0.001 6</text>
<text class="pl" x="1015" y="347" text-anchor="middle">Time [s]</text>
<text class="pl" transform="translate(277 197) rotate(-90)" text-anchor="middle">Voltage / V</text>
<text class="pl" transform="translate(1736 202) rotate(90)" text-anchor="middle" style="fill:#d4d43a;stroke:#d4d43a">Current / A</text>
<rect x="1400.7" y="87.4" width="90.8" height="38.6" rx="6.5" fill="#343636" fill-opacity="0.9" stroke="#666868" stroke-width="1.4"/>
<rect x="1404.2" y="92.3" width="12.6" height="12.2" fill="#fff"/><path d="M1407.0 98.7l2.7 2.6l4.6 -5.4" stroke="#000" stroke-width="2" fill="none"/>
<rect x="1404.2" y="108.2" width="12.6" height="12.2" fill="#fff"/><path d="M1407.0 114.60000000000001l2.7 2.6l4.6 -5.4" stroke="#000" stroke-width="2" fill="none"/>
<path d="M1418.5 97.700h12.500" stroke="#a4ac3c" stroke-width="1.300"/><path d="M1418.5 114h11.500" stroke="#d08a3c" stroke-width="1.300"/>
<text class="pl" x="1439" y="101.800" style="fill:#54648e;font-family:'Liberation Mono','DejaVu Sans Mono',monospace;font-size:10px;font-weight:bold;stroke:none">Core.Ch4</text>
<text class="pl" x="1438.5" y="118" style="fill:#d8903c;font-family:'Liberation Mono','DejaVu Sans Mono',monospace;font-size:10px;font-weight:bold;stroke:none">Vs1</text>
</svg>
<svg class="a" style="left:230px;top:340px" width="160" height="20" viewBox="0 0 160 20"><path d="M1 2h4l2 2v7H1z" fill="#f4f4f4"/><path d="M6 6.500h5l2.500 2.500v7.500H6z" fill="#e8e8a8"/><path d="M7.500 10.500h4M7.500 12.500h4M7.500 14.500h4" stroke="#9a9a60" stroke-width=".8"/><g stroke="#3fae4a" stroke-width="2.6" fill="none"><path d="M21 2.500l4.500 4.500M33.500 2.500l-4.500 4.500M21 15l4.500 -4.500M33.500 15l-4.500 -4.500"/></g><g fill="#7fd486"><path d="M23.500 7.800h2.800v-2.800zM31 7.800h-2.800v-2.800zM23.500 9.700h2.800v2.800zM31 9.700h-2.800v2.800z"/></g><rect x="46" y="1" width="14" height="12.500" fill="#1616c0"/><rect x="48.500" y="1" width="9" height="5.500" fill="#f2f2ff"/><rect x="50" y="9" width="6" height="3.500" fill="#dcdcf8"/><rect x="51" y="9.800" width="1.600" height="2.700" fill="#1616c0"/><rect x="72" y="2.500" width="13" height="6.500" rx="1" fill="#e6e690"/><text x="78.500" y="7.800" text-anchor="middle" style="font:bold 4.500px 'DejaVu Sans',sans-serif;fill:#4a4a10">ITEM</text><path d="M71.500 15l7 -4l7 4" stroke="#e0661c" stroke-width="1.700" fill="none"/><path d="M94 8h4.500v-5h5v10h4.500" stroke="#e86a24" stroke-width="1.700" fill="none"/><rect x="136" y="1.500" width="12" height="11.500" rx="2" fill="#f4f4f4"/></svg>
<svg class="a" style="left:540px;top:382px" width="1253" height="545" viewBox="540 382 1253 545">
<rect x="540" y="382.5" width="1252.5" height="543.2" fill="#000"/>
<path d="M623 414.0H1784M623 439.8H1784M623 465.6H1784M623 491.5H1784M623 517.3H1784M623 543.1H1784M623 568.9H1784M623 594.7H1784M623 620.6H1784M623 646.4H1784M623 672.2H1784M623 698.0H1784M623 723.8H1784M623 749.7H1784M623 775.5H1784M623 801.3H1784M623 827.1H1784M623 852.9H1784M623 878.8H1784M662.9 402V881.6M750.4 402V881.6M838.0 402V881.6M925.5 402V881.6M1013.1 402V881.6M1100.7 402V881.6M1188.2 402V881.6M1275.8 402V881.6M1363.3 402V881.6M1450.8 402V881.6M1538.4 402V881.6M1625.9 402V881.6M1713.5 402V881.6M1801.0 402V881.6" stroke="#878787" stroke-width="1.5" fill="none"/>
<path d="M687.6 861.9L630.3 867" stroke="rgb(195,70,95)" stroke-width="1.8" stroke-linecap="round"/>
<path d="M630.3 867L646 729" stroke="rgb(196,92,92)" stroke-width="1.8" stroke-linecap="round"/>
<path d="M646 729L750.5 589.6" stroke="rgb(198,98,86)" stroke-width="1.8" stroke-linecap="round"/>
<path d="M750.5 589.6L910 474" stroke="rgb(196,106,84)" stroke-width="1.8" stroke-linecap="round"/>
<path d="M910 474L1113 414" stroke="rgb(194,116,84)" stroke-width="1.8" stroke-linecap="round"/>
<path d="M1113 414L1328 439" stroke="rgb(192,126,86)" stroke-width="1.8" stroke-linecap="round"/>
<path d="M1328 439L1508 541" stroke="rgb(188,142,88)" stroke-width="1.8" stroke-linecap="round"/>
<path d="M1508 541L1624.5 674" stroke="rgb(186,156,90)" stroke-width="1.8" stroke-linecap="round"/>
<path d="M1624.5 674L1714 836" stroke="rgb(184,168,92)" stroke-width="1.8" stroke-linecap="round"/>
<path d="M1714 836L1736.3 866.8" stroke="rgb(178,176,88)" stroke-width="1.8" stroke-linecap="round"/>
<path d="M1736.3 866.8L1756.8 875.7" stroke="rgb(170,184,84)" stroke-width="1.8" stroke-linecap="round"/>
<path d="M1756.8 875.7L1778.6 868.1" stroke="rgb(165,188,82)" stroke-width="1.8" stroke-linecap="round"/>
<path d="M622.3 401.8V882.7H1784" stroke="#fff" stroke-width="2.2" fill="none"/>
<path d="M617.5 414.0h4M617.5 439.8h4M617.5 465.6h4M617.5 491.5h4M617.5 517.3h4M617.5 543.1h4M617.5 568.9h4M617.5 594.7h4M617.5 620.6h4M617.5 646.4h4M617.5 672.2h4M617.5 698.0h4M617.5 723.8h4M617.5 749.7h4M617.5 775.5h4M617.5 801.3h4M617.5 827.1h4M617.5 852.9h4M617.5 878.8h4M662.9 883.5v4M750.4 883.5v4M838.0 883.5v4M925.5 883.5v4M1013.1 883.5v4M1100.7 883.5v4M1188.2 883.5v4M1275.8 883.5v4M1363.3 883.5v4M1450.8 883.5v4M1538.4 883.5v4M1625.9 883.5v4M1713.5 883.5v4" stroke="#aaa" stroke-width="1.2" fill="none"/>
<text class="pl" x="614.4" y="418.0" text-anchor="end">0.004 2</text>
<text class="pl" x="614.4" y="443.8" text-anchor="end">0.004</text>
<text class="pl" x="614.4" y="469.6" text-anchor="end">0.003 8</text>
<text class="pl" x="614.4" y="495.5" text-anchor="end">0.003 6</text>
<text class="pl" x="614.4" y="521.3" text-anchor="end">0.003 4</text>
<text class="pl" x="614.4" y="547.1" text-anchor="end">0.003 2</text>
<text class="pl" x="614.4" y="572.9" text-anchor="end">0.003</text>
<text class="pl" x="614.4" y="598.7" text-anchor="end">0.002 8</text>
<text class="pl" x="614.4" y="624.6" text-anchor="end">0.002 6</text>
<text class="pl" x="614.4" y="650.4" text-anchor="end">0.002 4</text>
<text class="pl" x="614.4" y="676.2" text-anchor="end">0.002 2</text>
<text class="pl" x="614.4" y="702.0" text-anchor="end">0.002</text>
<text class="pl" x="614.4" y="727.8" text-anchor="end">0.001 8</text>
<text class="pl" x="614.4" y="753.7" text-anchor="end">0.001 6</text>
<text class="pl" x="614.4" y="779.5" text-anchor="end">0.001 4</text>
<text class="pl" x="614.4" y="805.3" text-anchor="end">0.001 2</text>
<text class="pl" x="614.4" y="831.1" text-anchor="end">0.001</text>
<text class="pl" x="614.4" y="856.9" text-anchor="end">0.000 8</text>
<text class="pl" x="614.4" y="882.8" text-anchor="end">0.000 6</text>
<text class="pl" x="664.4" y="900.6" text-anchor="middle">0.022</text>
<text class="pl" x="751.9" y="900.6" text-anchor="middle">0.023</text>
<text class="pl" x="839.5" y="900.6" text-anchor="middle">0.024</text>
<text class="pl" x="927.0" y="900.6" text-anchor="middle">0.025</text>
<text class="pl" x="1014.6" y="900.6" text-anchor="middle">0.026</text>
<text class="pl" x="1102.2" y="900.6" text-anchor="middle">0.027</text>
<text class="pl" x="1189.7" y="900.6" text-anchor="middle">0.028</text>
<text class="pl" x="1277.2" y="900.6" text-anchor="middle">0.029</text>
<text class="pl" x="1364.8" y="900.6" text-anchor="middle">0.03</text>
<text class="pl" x="1452.3" y="900.6" text-anchor="middle">0.031</text>
<text class="pl" x="1539.9" y="900.6" text-anchor="middle">0.032</text>
<text class="pl" x="1627.4" y="900.6" text-anchor="middle">0.033</text>
<text class="pl" x="1715.0" y="900.6" text-anchor="middle">0.034</text>
<text class="pl" x="1204" y="915" text-anchor="middle">Re(Z)</text>
<text class="pl" transform="translate(562 638) rotate(-90)" text-anchor="middle">-Im(Z)</text>
<rect x="1355.2" y="409.2" width="61" height="22.4" rx="7" fill="#2b2b2b" fill-opacity="0.95" stroke="#5c5c5c" stroke-width="1.4"/>
<rect x="1358.7" y="414.2" width="12.3" height="12.3" fill="#fff"/><path d="M1361.5 420.59999999999997l2.7 2.6l4.6 -5.4" stroke="#000" stroke-width="2" fill="none"/>
<path d="M1374.6 419.800h9" stroke="#5a5a5a" stroke-width="1.200"/>
<text class="pl" x="1392" y="423.400" style="fill:#3c4a6a;font-family:'Liberation Mono','DejaVu Sans Mono',monospace;font-size:10px;font-weight:bold;stroke:none">Vs1</text>
<path d="M1274.800 829.300v14.400l3.300 -3.100l2.800 6.300l2.400 -1.100l-2.800 -6.200h5.300z" fill="#fff" stroke="#000" stroke-width=".400"/>
</svg>
<div class="btn" style="left:647px;top:388px;width:60px;height:19px;line-height:18px;background:#fff;">Standard</div>
<div class="btn" style="left:714px;top:388px;width:58px;height:19px;line-height:18px;background:#cfe5f8;border-color:#b4d2ee;">Nyquist</div>
<div class="btn" style="left:780px;top:388px;width:59px;height:19px;line-height:18px;background:#fff;">Bode</div>
<svg class="a" style="left:549px;top:903px" width="160" height="20" viewBox="0 0 160 20"><path d="M1 2h4l2 2v7H1z" fill="#f4f4f4"/><path d="M6 6.500h5l2.500 2.500v7.500H6z" fill="#e8e8a8"/><path d="M7.500 10.500h4M7.500 12.500h4M7.500 14.500h4" stroke="#9a9a60" stroke-width=".8"/><g stroke="#3fae4a" stroke-width="2.6" fill="none"><path d="M21 2.500l4.500 4.500M33.500 2.500l-4.500 4.500M21 15l4.500 -4.500M33.500 15l-4.500 -4.500"/></g><g fill="#7fd486"><path d="M23.500 7.800h2.800v-2.800zM31 7.800h-2.800v-2.800zM23.500 9.700h2.800v2.800zM31 9.700h-2.800v2.800z"/></g><rect x="46" y="1" width="14" height="12.500" fill="#1616c0"/><rect x="48.500" y="1" width="9" height="5.500" fill="#f2f2ff"/><rect x="50" y="9" width="6" height="3.500" fill="#dcdcf8"/><rect x="51" y="9.800" width="1.600" height="2.700" fill="#1616c0"/><rect x="82.2" y="5.800" width="11.700" height="11.700" rx="2" fill="#f2f2f2"/></svg>
</body></html>
